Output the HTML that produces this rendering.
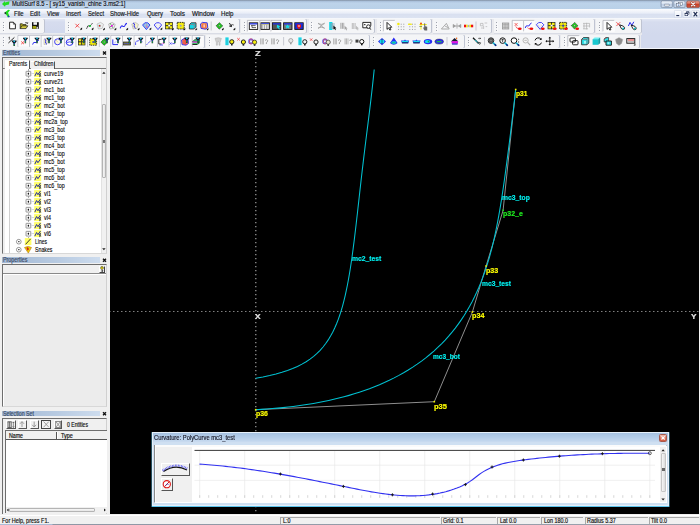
<!DOCTYPE html>
<html><head><meta charset="utf-8"><title>MultiSurf 8.5</title>
<style>
html,body{margin:0;padding:0;}
body{width:700px;height:525px;overflow:hidden;position:relative;background:#f0f0f0;font-family:"Liberation Sans",sans-serif;font-size:6.6px;color:#111;}
.a{position:absolute;}
.t{position:absolute;white-space:nowrap;line-height:8px;height:8px;-webkit-text-stroke:0.18px currentColor;}
#title{left:0;top:0;width:700px;height:9px;background:linear-gradient(#7d8a9c 0,#a9bfd9 1.2px,#bdd3ea 3px,#b9d0e8 9px);}
#menu{left:0;top:8.6px;width:700px;height:10px;background:linear-gradient(#fbfcfe 0,#e9eef8 40%,#d9e0f0 55%,#dde4f2 100%);}
#tb{left:0;top:18.5px;width:700px;height:30.5px;background:#e9eaee;}
.fill{position:absolute;background:linear-gradient(#e2e7f4 0,#d6dcee 3px,#d2d9ed 100%);}
.band{position:absolute;background:#f4f5f7;border-radius:0 1.2px 1.2px 0;box-shadow:0.7px 0 0 0 #aeb4c6, 0 0.5px 0 0 #c9cedb;}
.grip{position:absolute;width:1.1px;height:9.2px;background:repeating-linear-gradient(#9fa3ae 0,#9fa3ae 1.1px,transparent 1.1px,transparent 2.66px);box-shadow:0.6px 0.6px 0 #fff;}
.sep{position:absolute;width:1px;height:10px;background:#b9bdc8;}
#canvas{left:109.5px;top:48.6px;width:589.1px;height:465.3px;background:#000;}
#redge{left:698.6px;top:48.6px;width:1.4px;height:466px;background:#f6f6f6;}
#bedge{left:0;top:523.5px;width:700px;height:1.5px;background:linear-gradient(90deg,#aabdd7 0,#aabdd7 52px,#8f97a5 53px,#9aa1ad 100%);}
#status{left:0;top:514.5px;width:700px;height:10.5px;background:#f0f0f0;border-top:0.5px solid #fff;}
.pane{position:absolute;top:1.3px;height:7.5px;border-left:0.7px solid #a8a8a8;border-top:0.7px solid #a8a8a8;box-sizing:border-box;}
.hdr{position:absolute;height:6px;background:linear-gradient(90deg,#a9bdd7,#bccde3 60%,#cddbec);}
.hdr span{position:absolute;left:1px;top:-1.2px;color:#2b3d5c;font-size:6.6px;line-height:8px;}
.cl{position:absolute;font-size:6px;font-weight:bold;line-height:6px;color:#111;}
.lbl{position:absolute;font-family:"Liberation Sans",sans-serif;font-weight:bold;font-size:6.6px;line-height:8px;white-space:nowrap;}
</style></head><body>
<div id="title" class="a"></div>
<div class="t" style="left:12.40px;top:0.28px;font-size:6.7px;color:#0c0e16;transform:scaleX(0.862);transform-origin:0 0;text-shadow:0 0 1.5px #eaf1fa;">MultiSurf 8.5 - [ sy15_vanish_chine 3.ms2:1]</div>
<svg class="a" style="left:1px;top:0px" width="10" height="9" viewBox="0 0 10 9"><path d="M1 4 L4 1 L4 2.5 L8.5 1.2 L8 4.5 L4.5 5.2 L4 6.8 Z" fill="#22dd22"/></svg>
<svg class="a" style="left:655px;top:0px" width="45" height="9" viewBox="655 0 45 9"><defs><linearGradient id="gb" x1="0" y1="0" x2="0" y2="1"><stop offset="0" stop-color="#f1f6fc"/><stop offset="0.45" stop-color="#d5e1f0"/><stop offset="0.5" stop-color="#bfd0e6"/><stop offset="1" stop-color="#cbdaec"/></linearGradient><linearGradient id="gr" x1="0" y1="0" x2="0" y2="1"><stop offset="0" stop-color="#eeb0a2"/><stop offset="0.45" stop-color="#d9634e"/><stop offset="0.5" stop-color="#c7412a"/><stop offset="1" stop-color="#d0553c"/></linearGradient></defs><rect x="661.1" y="0.9" width="11.3" height="6.7" rx="1.3" fill="url(#gb)" stroke="#6d7b93" stroke-width="0.6"/><rect x="673.8" y="0.9" width="11.3" height="6.7" rx="1.3" fill="url(#gb)" stroke="#6d7b93" stroke-width="0.6"/><rect x="686.7" y="0.9" width="12.8" height="6.7" rx="1.3" fill="url(#gr)" stroke="#7a3a30" stroke-width="0.55"/><rect x="664.4" y="4.2" width="4.9" height="1.9" rx="0.4" fill="#fff" stroke="#4a566e" stroke-width="0.45"/><rect x="678.4" y="2.3" width="3.8" height="2.9" fill="#fff" stroke="#4a566e" stroke-width="0.45"/><rect x="676.7" y="3.6" width="3.8" height="2.9" fill="#fff" stroke="#4a566e" stroke-width="0.45"/><rect x="677.7" y="4.6" width="1.8" height="1" fill="#3a68b0"/><path d="M691.3 2.6L695 6M695 2.6L691.3 6" stroke="#7a2a20" stroke-width="1.9" stroke-linecap="round"/><path d="M691.3 2.6L695 6M695 2.6L691.3 6" stroke="#fff" stroke-width="1.1" stroke-linecap="round"/></svg>
<div id="menu" class="a"></div>
<svg class="a" style="left:2px;top:9px" width="10" height="10" viewBox="0 0 10 10"><path d="M2.2 4 L6.2 0.8 L8 1.2 L6 3.8 L7.8 8 L5.8 8.2 L4.2 5.5 Z" fill="#19e019"/><path d="M2 4 L4 3 L4.3 5.6 Z" fill="#223"/><path d="M6 6 L7.8 8 L5.8 8.2Z" fill="#2233cc"/></svg>
<div class="t" style="left:14.00px;top:9.51px;font-size:6.6px;color:#141822;transform:scaleX(0.903);transform-origin:0 0;">File</div><div class="t" style="left:30.00px;top:9.51px;font-size:6.6px;color:#141822;transform:scaleX(0.879);transform-origin:0 0;">Edit</div><div class="t" style="left:47.00px;top:9.51px;font-size:6.6px;color:#141822;transform:scaleX(0.860);transform-origin:0 0;">View</div><div class="t" style="left:66.20px;top:9.51px;font-size:6.6px;color:#141822;transform:scaleX(0.897);transform-origin:0 0;">Insert</div><div class="t" style="left:88.00px;top:9.51px;font-size:6.6px;color:#141822;transform:scaleX(0.872);transform-origin:0 0;">Select</div><div class="t" style="left:110.40px;top:9.51px;font-size:6.6px;color:#141822;transform:scaleX(0.901);transform-origin:0 0;">Show-Hide</div><div class="t" style="left:147.00px;top:9.51px;font-size:6.6px;color:#141822;transform:scaleX(0.890);transform-origin:0 0;">Query</div><div class="t" style="left:170.00px;top:9.51px;font-size:6.6px;color:#141822;transform:scaleX(0.974);transform-origin:0 0;">Tools</div><div class="t" style="left:191.50px;top:9.51px;font-size:6.6px;color:#141822;transform:scaleX(0.959);transform-origin:0 0;">Window</div><div class="t" style="left:220.50px;top:9.51px;font-size:6.6px;color:#141822;transform:scaleX(0.921);transform-origin:0 0;">Help</div>
<svg class="a" style="left:670px;top:9px" width="30" height="10" viewBox="670 9 30 10"><defs><linearGradient id="gm" x1="0" y1="0" x2="0" y2="1"><stop offset="0" stop-color="#ffffff"/><stop offset="1" stop-color="#e6ecf7"/></linearGradient></defs><rect x="674.4" y="10.4" width="7.1" height="7.3" rx="0.8" fill="url(#gm)" stroke="#c3cbdc" stroke-width="0.5"/><rect x="683" y="10.4" width="7.1" height="7.3" rx="0.8" fill="url(#gm)" stroke="#c3cbdc" stroke-width="0.5"/><rect x="691.7" y="10.4" width="7.3" height="7.3" rx="0.8" fill="url(#gm)" stroke="#c3cbdc" stroke-width="0.5"/><rect x="676.3" y="15" width="2.9" height="1.1" fill="#1f2c52"/><path d="M686.4 13V11.9H689V14.3H688" fill="none" stroke="#1f2c52" stroke-width="0.6"/><path d="M686.2 12H689.2" stroke="#1f2c52" stroke-width="0.8"/><rect x="685" y="13.3" width="2.7" height="2.4" fill="#f6f8fc" stroke="#1f2c52" stroke-width="0.6"/><path d="M684.8 13.4H687.9" stroke="#1f2c52" stroke-width="0.8"/><path d="M693.6 11.8L697.2 16.3M697.2 11.8L693.6 16.3" stroke="#1f2c52" stroke-width="1.15"/></svg>
<div id="tb" class="a"></div>
<div class="a" style="left:0;top:17.8px;width:700px;height:1.3px;background:#f5f7fb"></div><div class="fill" style="left:45px;top:19px;width:19.6px;height:14px"></div><div class="fill" style="left:642.4px;top:19px;width:57.6px;height:15.5px"></div><div class="fill" style="left:640.5px;top:34.5px;width:59.5px;height:13.2px;background:#d2d9ed"></div>
<div class="band" style="left:0px;top:19.1px;width:44.3px;height:13.8px"></div><div class="grip" style="left:2.8px;top:21.7px"></div><div class="band" style="left:65px;top:19.1px;width:174px;height:13.8px"></div><div class="grip" style="left:67.8px;top:21.7px"></div><div class="band" style="left:241.4px;top:19.1px;width:65px;height:13.8px"></div><div class="grip" style="left:244.2px;top:21.7px"></div><div class="band" style="left:308.6px;top:19.1px;width:65.7px;height:13.8px"></div><div class="grip" style="left:311.4px;top:21.7px"></div><div class="band" style="left:377px;top:19.1px;width:54.4px;height:13.8px"></div><div class="grip" style="left:379.8px;top:21.7px"></div><div class="band" style="left:433px;top:19.1px;width:58.4px;height:13.8px"></div><div class="grip" style="left:435.8px;top:21.7px"></div><div class="band" style="left:493.6px;top:19.1px;width:100.7px;height:13.8px"></div><div class="grip" style="left:496.4px;top:21.7px"></div><div class="band" style="left:596.4px;top:19.1px;width:45px;height:13.8px"></div><div class="grip" style="left:599.2px;top:21.7px"></div><div class="band" style="left:0px;top:34.5px;width:204.3px;height:13.2px"></div><div class="grip" style="left:2.8px;top:37.1px"></div><div class="band" style="left:205.7px;top:34.5px;width:162.9px;height:13.2px"></div><div class="grip" style="left:208.5px;top:37.1px"></div><div class="band" style="left:370.3px;top:34.5px;width:93.3px;height:13.2px"></div><div class="grip" style="left:373.1px;top:37.1px"></div><div class="band" style="left:465px;top:34.5px;width:93.6px;height:13.2px"></div><div class="grip" style="left:467.8px;top:37.1px"></div><div class="band" style="left:560.7px;top:34.5px;width:78.6px;height:13.2px"></div><div class="grip" style="left:563.5px;top:37.1px"></div>
<div class="a" style="left:0;top:47.6px;width:700px;height:1.2px;background:#f3f5fa"></div>
<svg class="a" style="left:0px;top:18px" width="700" height="31" viewBox="0 18 700 31"><path d="M9.6 22.2 h3.8 l2 2 v4.6 h-5.8z" fill="#fff" stroke="#111" stroke-width="0.9" stroke-linejoin="round"/><path d="M13.4 22.2 v2 h2" fill="none" stroke="#111" stroke-width="0.6"/><path d="M20.2 28.6 v-4.8 h2.2 l0.6 0.8 h3 v1.2" fill="#b8b020" stroke="#111" stroke-width="0.7"/><path d="M20.2 28.6 l1.6 -2.8 h6 l-1.8 2.8z" fill="#d8d040" stroke="#111" stroke-width="0.7" stroke-linejoin="round"/><path d="M25 22.8 q1.6 -0.8 2.6 0.6 m0 0 l-1.2 -0.2 m1.2 0.2 l0.2 -1.2" fill="none" stroke="#111" stroke-width="0.6"/><rect x="32" y="22.2" width="6.8" height="6.6" fill="#111"/><rect x="33.4" y="22.2" width="3.6" height="2.6" fill="#f4f4f4"/><rect x="32.6" y="26" width="3.6" height="2.8" fill="#a0a010"/><rect x="36.6" y="26.8" width="1.2" height="2" fill="#fff"/><path d="M75.4 23.8 l3.8 3.8 M79.2 23.8 l-3.8 3.8" fill="none" stroke="#f03030" stroke-width="0.8"/><path d="M80.2 29 l1.9 -1.4 l0 1.6 l-1.4 1z" fill="#111"/><path d="M86.6 28.6 l1.6 -3 l1.8 0.6 l2.4 -3" fill="none" stroke="#111" stroke-width="1" stroke-dasharray="1.4 0.5"/><circle cx="90" cy="26" r="1" fill="#10d030"/><path d="M91.6 29 l1.9 -1.4 l0 1.6 l-1.4 1z" fill="#111"/><path d="M97 24 l3.6 -1.6 l3 2 l-1.4 4 l-3.8 0.6z" fill="#eee" stroke="#aaa" stroke-width="0.6"/><circle cx="99.6" cy="25.8" r="1.6" fill="#a8f0f0"/><rect x="98.8" y="25" width="1.6" height="1.6" fill="#f01010"/><path d="M103 29.2 l1.9 -1.4 l0 1.6 l-1.4 1z" fill="#111"/><path d="M108.6 24 l3.6 -1.6 l3 2 l-1.4 4 l-3.8 0.6z" fill="#eee" stroke="#999" stroke-width="0.6"/><path d="M110 23 l3 5" fill="none" stroke="#20a020" stroke-width="0.6"/><path d="M109.2 27.6 l4.6 -3.4" fill="none" stroke="#333" stroke-width="0.6"/><rect x="111" y="25" width="1.7" height="1.7" fill="#f010f0"/><path d="M114.4 29.2 l1.9 -1.4 l0 1.6 l-1.4 1z" fill="#111"/><path d="M120.2 28.4 q1 -3.4 2.6 -2.2 q1.4 1 2.2 -0.8 q0.8 -2 2 -2" fill="none" stroke="#2a2af0" stroke-width="1.1"/><path d="M126.2 29.2 l1.9 -1.4 l0 1.6 l-1.4 1z" fill="#111"/><path d="M131.8 24 l3.6 -1.6 l3 2 l-1.4 4 l-3.8 0.6z" fill="#f4f0c8" stroke="#aaa" stroke-width="0.6"/><path d="M133 23 q2.4 0.6 1.2 2.6 q-0.6 1.6 1.6 2.8" fill="none" stroke="#2a2af0" stroke-width="1"/><path d="M137.6 29.2 l1.9 -1.4 l0 1.6 l-1.4 1z" fill="#111"/><path d="M142.6 25 l2.2 -2.2 h3 l2.2 2.2 l-3.6 4.6z" fill="#80e8f0" stroke="#2a2af0" stroke-width="0.9" stroke-linejoin="round"/><path d="M144.2 24 l2.4 4 M146.2 23 l0.6 5 M148.4 24 l-1.6 4" fill="none" stroke="#f040a0" stroke-width="0.5"/><path d="M149.4 29 l1.9 -1.4 l0 1.6 l-1.4 1z" fill="#111"/><path d="M154.2 25 l2.2 -2.2 h3 l2.2 2.2 l-3.6 4.6z" fill="#fff" stroke="#2a2af0" stroke-width="0.9" stroke-linejoin="round"/><path d="M156 25 h4 l-2 3z" fill="none" stroke="#bbb" stroke-width="0.4"/><path d="M160.4 29 l1.9 -1.4 l0 1.6 l-1.4 1z" fill="#111"/><rect x="165.6" y="22.4" width="3.4" height="3.1" fill="#f4ec10" stroke="#222" stroke-width="0.7"/><rect x="169.2" y="22.4" width="3.4" height="3.1" fill="#f4ec10" stroke="#222" stroke-width="0.7"/><rect x="165.6" y="25.8" width="3.4" height="3.1" fill="#f4ec10" stroke="#222" stroke-width="0.7"/><rect x="169.2" y="25.8" width="3.4" height="3.1" fill="#f4ec10" stroke="#222" stroke-width="0.7"/><rect x="168.2" y="24.7" width="2" height="1.8" fill="#fff"/><path d="M171.8 29.2 l1.9 -1.4 l0 1.6 l-1.4 1z" fill="#111"/><rect x="177.2" y="22.4" width="7" height="6.6" fill="#f4ec10" stroke="#222" stroke-width="0.9" stroke-dasharray="1.6 0.7"/><circle cx="180.7" cy="25.7" r="1" fill="#a0a0c0"/><path d="M183.4 29.4 l1.9 -1.4 l0 1.6 l-1.4 1z" fill="#111"/><path d="M189.4 24.6 l1.8 -1.8 h4.8 v4.4 l-1.8 1.8 h-4.8z" fill="#10d8e8" stroke="#222" stroke-width="0.8" stroke-linejoin="round"/><path d="M189.4 24.6 h4.8 v4.4 M194.2 24.6 l1.8 -1.8" fill="none" stroke="#e04040" stroke-width="0.5"/><path d="M195.2 29.4 l1.9 -1.4 l0 1.6 l-1.4 1z" fill="#111"/><path d="M200.4 24 l2 -1.6 l4.8 0.4 l0.6 4.8 l-2.4 1.6 l-4.4 -0.8z" fill="#f0a060" stroke="#2a2af0" stroke-width="0.9" stroke-linejoin="round"/><path d="M203 23.4 v5 M205 23.6 v5" fill="none" stroke="#f02020" stroke-width="0.7"/><rect x="203.6" y="24.4" width="1" height="3" fill="#fff"/><path d="M206.6 29.4 l1.9 -1.4 l0 1.6 l-1.4 1z" fill="#111"/><path d="M211.2 21.5 V30.5" fill="none" stroke="#b4b7c2" stroke-width="0.7"/><path d="M216.1 25.8 l3.4 -3.2 l3.2 3.4 l-3.4 3.2z" fill="#20d020" stroke="#222" stroke-width="0.8" stroke-dasharray="1 0.6"/><circle cx="219.4" cy="25.8" r="0.8" fill="#e8ffe8" stroke="#333" stroke-width="0.4"/><path d="M221.8 29.2 l1.9 -1.4 l0 1.6 l-1.4 1z" fill="#111"/><path d="M229.4 23 l2 3.6 m0 0 l-2.2 -0.6 m2.2 0.6 l0.4 -2.2" fill="none" stroke="#111" stroke-width="0.9"/><path d="M232.6 24 l0.8 1.4" fill="none" stroke="#111" stroke-width="0.7"/><path d="M233.4 29.2 l1.9 -1.4 l0 1.6 l-1.4 1z" fill="#111"/><rect x="247.4" y="20.4" width="12" height="11.2" fill="#fbfbfc"/><path d="M247.4 31.6 V20.4 H259.4" fill="none" stroke="#9a9ca6" stroke-width="0.6"/><path d="M259.4 20.4 V31.6 H247.4" fill="none" stroke="#fff" stroke-width="0.6"/><rect x="259.8" y="20.4" width="10.8" height="11.2" fill="#fbfbfc"/><path d="M259.8 31.6 V20.4 H270.6" fill="none" stroke="#9a9ca6" stroke-width="0.6"/><path d="M270.6 20.4 V31.6 H259.8" fill="none" stroke="#fff" stroke-width="0.6"/><rect x="271" y="20.4" width="11" height="11.2" fill="#fbfbfc"/><path d="M271 31.6 V20.4 H282" fill="none" stroke="#9a9ca6" stroke-width="0.6"/><path d="M282 20.4 V31.6 H271" fill="none" stroke="#fff" stroke-width="0.6"/><rect x="249.3" y="22.8" width="8.4" height="6.6" fill="#fff" stroke="#111" stroke-width="0.9"/><rect x="249.7" y="23.2" width="7.6" height="1.3" fill="#2030e0"/><path d="M251 25.6 h4.6 M252 25.6 v2 h4" fill="none" stroke="#222" stroke-width="0.7"/><rect x="261" y="22.8" width="8.4" height="6.6" fill="#fff" stroke="#111" stroke-width="0.9"/><rect x="261.4" y="23.2" width="7.6" height="1.3" fill="#2030e0"/><path d="M262.8 24.6 v4.6 M264.6 24.6 v4.6 M266.4 24.6 v4.6 M268 24.6 v4.6" fill="none" stroke="#666" stroke-width="0.6"/><rect x="261.4" y="24.1" width="7.6" height="0.6" fill="#e8e060"/><rect x="272.4" y="22.8" width="8.4" height="6.6" fill="#555" stroke="#111" stroke-width="0.9"/><rect x="272.8" y="23.2" width="7.6" height="1.3" fill="#2030e0"/><path d="M277 24.8 l3.6 1.6 l-1.8 0.6 l1.2 2.2 l-1 0.4 l-1.2 -2.2 l-1 1z" fill="#10e0f0"/><rect x="283.6" y="22.8" width="8.4" height="6.6" fill="#777" stroke="#111" stroke-width="0.9"/><rect x="284" y="23.2" width="7.6" height="1.3" fill="#2030e0"/><path d="M287.6 24.4 l0.8 1.4 h1.8 l-1.4 1.2 l0.6 1.8 l-1.8 -1 l-1.8 1 l0.6 -1.8 l-1.4 -1.2 h1.8z" fill="#10e0f0"/><rect x="294.8" y="22.8" width="8.4" height="6.6" fill="#2030d0" stroke="#111" stroke-width="0.9"/><rect x="295.2" y="23.2" width="7.6" height="1.3" fill="#2030e0"/><path d="M297 24.6 h4 v2.4 q-2 2.2 -2 2.2 q0 0 -2 -2.2z" fill="#f01818"/><circle cx="299" cy="26" r="0.8" fill="#fff"/><path d="M318 23 l6.6 5.6 M324.6 23 l-6.6 5.6 M318 23.6 q3.2 1.6 6.6 0 M318 28 q3.2 -1.6 6.6 0" fill="none" stroke="#a4a4a4" stroke-width="0.9"/><rect x="329.2" y="22" width="3.2" height="8" fill="#10d8e8"/><rect x="330.6" y="23" width="1" height="6" fill="#8ab"/><rect x="332.1" y="23" width="1" height="6" fill="#8ab"/><rect x="333.6" y="23" width="0.8" height="6" fill="#8ab"/><path d="M333.4 25.4 v4.2 l1 -0.8 l0.8 1.4 l0.7 -0.4 l-0.8 -1.4 l1.3 -0.1z" fill="#111"/><rect x="340.4" y="22.8" width="1" height="6" fill="#a4a4a4"/><rect x="341.9" y="22.8" width="1" height="6" fill="#a4a4a4"/><rect x="343.4" y="22.8" width="0.8" height="6" fill="#a4a4a4"/><path d="M344.6 25.8 v4 l1 -0.8 l0.8 1.4 l0.7 -0.4 l-0.8 -1.4 l1.3 -0.1z" fill="#a4a4a4"/><rect x="351.8" y="23" width="1" height="6" fill="#bbb"/><rect x="353.3" y="23" width="1" height="6" fill="#bbb"/><rect x="354.8" y="23" width="0.8" height="6" fill="#bbb"/><path d="M356 25.8 v4 l1 -0.8 l0.8 1.4 l0.7 -0.4 l-0.8 -1.4 l1.3 -0.1z" fill="#bbb"/><path d="M362.8 22.4 h8 v3 q-1 2.4 -3.4 2.4 h-4.6z" fill="#fff" stroke="#111" stroke-width="0.9"/><rect x="364.2" y="24" width="1.2" height="1.2" fill="#111"/><circle cx="368.4" cy="26.6" r="1.8" fill="#fff" stroke="#111" stroke-width="0.9"/><path d="M369.6 28 l1.2 1.6" fill="none" stroke="#111" stroke-width="1"/><rect x="383.4" y="20.4" width="11.6" height="11" fill="#fbfbfc"/><path d="M383.4 31.4 V20.4 H395" fill="none" stroke="#9a9ca6" stroke-width="0.6"/><path d="M395 20.4 V31.4 H383.4" fill="none" stroke="#fff" stroke-width="0.6"/><path d="M387 22.4 v7 l1.6 -1.5 l1.2 2.2 l1.1 -0.5 l-1.2 -2.2 l2.1 -0.2z" fill="#fff" stroke="#111" stroke-width="0.9" stroke-linejoin="round"/><rect x="398.15" y="23.75" width="0.9" height="0.9" fill="#8a8a90"/><rect x="398.15" y="26.35" width="0.9" height="0.9" fill="#8a8a90"/><rect x="398.15" y="28.95" width="0.9" height="0.9" fill="#8a8a90"/><rect x="400.75" y="23.75" width="0.9" height="0.9" fill="#8a8a90"/><rect x="400.75" y="26.35" width="0.9" height="0.9" fill="#8a8a90"/><rect x="400.75" y="28.95" width="0.9" height="0.9" fill="#8a8a90"/><rect x="403.35" y="23.75" width="0.9" height="0.9" fill="#8a8a90"/><rect x="403.35" y="26.35" width="0.9" height="0.9" fill="#8a8a90"/><rect x="403.35" y="28.95" width="0.9" height="0.9" fill="#8a8a90"/><circle cx="398.4" cy="24" r="1.3" fill="#f4ec10"/><rect x="409.35" y="23.75" width="0.9" height="0.9" fill="#8a8a90"/><rect x="409.35" y="26.35" width="0.9" height="0.9" fill="#8a8a90"/><rect x="409.35" y="28.95" width="0.9" height="0.9" fill="#8a8a90"/><rect x="411.95" y="23.75" width="0.9" height="0.9" fill="#8a8a90"/><rect x="411.95" y="26.35" width="0.9" height="0.9" fill="#8a8a90"/><rect x="411.95" y="28.95" width="0.9" height="0.9" fill="#8a8a90"/><rect x="414.55" y="23.75" width="0.9" height="0.9" fill="#8a8a90"/><rect x="414.55" y="26.35" width="0.9" height="0.9" fill="#8a8a90"/><rect x="414.55" y="28.95" width="0.9" height="0.9" fill="#8a8a90"/><rect x="408" y="23.6" width="3.8" height="1.3" fill="#f4ec10"/><path d="M421 22.4 v7.2 M419.4 24.6 h7.4" fill="none" stroke="#f4ec10" stroke-width="1"/><rect x="420.2" y="22.8" width="1.6" height="1.6" fill="#f03010"/><rect x="419.4" y="26" width="2.6" height="1" fill="#8a9a60"/><path d="M424.2 23.2 v4.4 l-0.8 -0.4 v1.6 l1.2 1.6 h2.6 v-3.6 l-2 -0.6 v-2.6z" fill="#666"/><path d="M441.4 29 l5 -5.6 l2.8 5.6z M445 26 l3 1.6" fill="none" stroke="#9a9a9a" stroke-width="0.8"/><path d="M453.2 26 h7.6 M453.2 24.4 l2.2 1.6 l-2.2 1.6z M460.8 24.4 l-2.2 1.6 l2.2 1.6z M457 23.4 v5.2" fill="#9a9a9a" stroke="#9a9a9a" stroke-width="0.7"/><rect x="464" y="24.7" width="2.2" height="2.6" fill="#f01010"/><rect x="466.2" y="24.7" width="1.6" height="2.6" fill="#f4ec10"/><rect x="467.8" y="24.9" width="1.6" height="2.2" fill="#a0a8d0"/><rect x="469.4" y="24.7" width="1.6" height="2.6" fill="#f4ec10"/><rect x="471" y="24.7" width="2.2" height="2.6" fill="#f01010"/><path d="M476 21.5 V30.5" fill="none" stroke="#b4b7c2" stroke-width="0.7"/><path d="M480.4 23.4 h2.6 v2.4 h-2.6z M484.6 23 h2.6 M483.6 25.8 v3.2 M485.6 26.6 h1.6 M483 28 h-2" fill="none" stroke="#b4b4b4" stroke-width="0.7"/><rect x="502.6" y="23" width="6.2" height="6" fill="#e8e8e8" stroke="#8a8a8a" stroke-width="0.7"/><path d="M504.2 23 v6 M505.7 23 v6 M507.2 23 v6 M502.6 24.5 h6.2 M502.6 26 h6.2 M502.6 27.5 h6.2" fill="none" stroke="#8a8a8a" stroke-width="0.45"/><rect x="512.2" y="20.4" width="11.2" height="11" fill="#fbfbfc"/><path d="M512.2 31.4 V20.4 H523.4" fill="none" stroke="#9a9ca6" stroke-width="0.6"/><path d="M523.4 20.4 V31.4 H512.2" fill="none" stroke="#fff" stroke-width="0.6"/><rect x="523.6" y="20.4" width="10.8" height="11" fill="#fbfbfc"/><path d="M523.6 31.4 V20.4 H534.4" fill="none" stroke="#9a9ca6" stroke-width="0.6"/><path d="M534.4 20.4 V31.4 H523.6" fill="none" stroke="#fff" stroke-width="0.6"/><path d="M514.6 23 l3 3 M517.6 23 l-3 3" fill="none" stroke="#f03030" stroke-width="0.7"/><path d="M515.8 26.4 q0.6 2 2.6 2.2" fill="none" stroke="#f03030" stroke-width="0.7"/><ellipse cx="519.8" cy="28.8" rx="1.9" ry="1.2" fill="#f01010"/><path d="M525.2 28 q0.8 -3 2.4 -2.2 q1.4 0.8 2 -0.8 q0.8 -2 2 -2" fill="none" stroke="#2a2af0" stroke-width="1"/><path d="M527.4 27.6 q1 1.4 2.6 1.2" fill="none" stroke="#f03030" stroke-width="0.7"/><ellipse cx="531.4" cy="28.8" rx="1.9" ry="1.2" fill="#f01010"/><path d="M536.4 24.8 l2.2 -2.2 h3 l2.2 2.2 l-3.6 4.6z" fill="#fff" stroke="#2a2af0" stroke-width="0.9" stroke-linejoin="round"/><path d="M538.2 25 h3.6 l-1.8 2.6z" fill="none" stroke="#bbb" stroke-width="0.4"/><ellipse cx="542.8" cy="28.8" rx="1.9" ry="1.2" fill="#f01010"/><rect x="548" y="22.4" width="3.4" height="3.1" fill="#f4ec10" stroke="#222" stroke-width="0.7"/><rect x="551.6" y="22.4" width="3.4" height="3.1" fill="#f4ec10" stroke="#222" stroke-width="0.7"/><rect x="548" y="25.8" width="3.4" height="3.1" fill="#f4ec10" stroke="#222" stroke-width="0.7"/><rect x="551.6" y="25.8" width="3.4" height="3.1" fill="#f4ec10" stroke="#222" stroke-width="0.7"/><rect x="550.6" y="24.7" width="2" height="1.8" fill="#fff"/><ellipse cx="554.8" cy="28.8" rx="1.9" ry="1.2" fill="#f01010"/><rect x="559.6" y="22.4" width="7" height="6.6" fill="#f4ec10" stroke="#222" stroke-width="0.9" stroke-dasharray="1.6 0.7"/><path d="M563.1 22.4 v6.6 M559.6 25.7 h7" fill="none" stroke="#555" stroke-width="0.5"/><circle cx="563.1" cy="25.7" r="1" fill="#3040c0"/><ellipse cx="566" cy="28.8" rx="1.9" ry="1.2" fill="#f01010"/><path d="M571.3 25.6 l3.4 -3.2 l3.2 3.4 l-3.4 3.2z" fill="#20d020" stroke="#222" stroke-width="0.8" stroke-dasharray="1 0.6"/><circle cx="574.6" cy="25.6" r="0.8" fill="#e8ffe8" stroke="#333" stroke-width="0.4"/><ellipse cx="577.2" cy="28.8" rx="1.9" ry="1.2" fill="#f01010"/><path d="M583 23.4 h6.6 M583 26 h6.6 M583 28.8 h5 M584 23.4 v5.4 M586.6 22.8 v6.6 M589.6 23.4 v4" fill="none" stroke="#b0b0b0" stroke-width="0.7"/><rect x="603" y="20.4" width="11.4" height="11" fill="#fbfbfc"/><path d="M603 31.4 V20.4 H614.4" fill="none" stroke="#9a9ca6" stroke-width="0.6"/><path d="M614.4 20.4 V31.4 H603" fill="none" stroke="#fff" stroke-width="0.6"/><path d="M607 22.4 v7 l1.6 -1.5 l1.2 2.2 l1.1 -0.5 l-1.2 -2.2 l2.1 -0.2z" fill="#fff" stroke="#111" stroke-width="0.9" stroke-linejoin="round"/><path d="M616.4 22.2 l3.8 3.8 M620.2 22.2 l-3.8 3.8" fill="none" stroke="#f03030" stroke-width="0.8"/><path d="M619.6 24.8 l3.8 1.4 q2 1.6 0.8 3 q-1.6 1 -3 -0.8z" fill="#fff" stroke="#111" stroke-width="0.9" stroke-linejoin="round"/><circle cx="623.2" cy="28.4" r="1" fill="#10c0c8"/><path d="M628.4 26 l1.6 -3.6 l1.8 3 l2 -3.6" fill="none" stroke="#2a2af0" stroke-width="1"/><path d="M631.2 25 l3.8 1.4 q2 1.6 0.8 3 q-1.6 1 -3 -0.8z" fill="#fff" stroke="#111" stroke-width="0.9" stroke-linejoin="round"/><circle cx="634.8" cy="28.6" r="1" fill="#10c0c8"/><path d="M18 46.8 V35.4 H29" fill="none" stroke="#a9acb8" stroke-width="0.8"/><rect x="18.4" y="35.8" width="10.8" height="10.6" fill="#fbfbfc"/><path d="M29.62 46.8 V35.4 H40.62" fill="none" stroke="#a9acb8" stroke-width="0.8"/><rect x="30.02" y="35.8" width="10.8" height="10.6" fill="#fbfbfc"/><path d="M41.24 46.8 V35.4 H52.24" fill="none" stroke="#a9acb8" stroke-width="0.8"/><rect x="41.64" y="35.8" width="10.8" height="10.6" fill="#fbfbfc"/><path d="M52.86 46.8 V35.4 H63.86" fill="none" stroke="#a9acb8" stroke-width="0.8"/><rect x="53.26" y="35.8" width="10.8" height="10.6" fill="#fbfbfc"/><path d="M64.48 46.8 V35.4 H75.48" fill="none" stroke="#a9acb8" stroke-width="0.8"/><rect x="64.88" y="35.8" width="10.8" height="10.6" fill="#fbfbfc"/><path d="M76.1 46.8 V35.4 H87.1" fill="none" stroke="#a9acb8" stroke-width="0.8"/><rect x="76.5" y="35.8" width="10.8" height="10.6" fill="#fbfbfc"/><path d="M87.72 46.8 V35.4 H98.72" fill="none" stroke="#a9acb8" stroke-width="0.8"/><rect x="88.12" y="35.8" width="10.8" height="10.6" fill="#fbfbfc"/><path d="M99.34 46.8 V35.4 H110.34" fill="none" stroke="#a9acb8" stroke-width="0.8"/><rect x="99.74" y="35.8" width="10.8" height="10.6" fill="#fbfbfc"/><path d="M110.96 46.8 V35.4 H121.96" fill="none" stroke="#a9acb8" stroke-width="0.8"/><rect x="111.36" y="35.8" width="10.8" height="10.6" fill="#fbfbfc"/><path d="M122.58 46.8 V35.4 H133.58" fill="none" stroke="#a9acb8" stroke-width="0.8"/><rect x="122.98" y="35.8" width="10.8" height="10.6" fill="#fbfbfc"/><path d="M134.2 46.8 V35.4 H145.2" fill="none" stroke="#a9acb8" stroke-width="0.8"/><rect x="134.6" y="35.8" width="10.8" height="10.6" fill="#fbfbfc"/><path d="M145.82 46.8 V35.4 H156.82" fill="none" stroke="#a9acb8" stroke-width="0.8"/><rect x="146.22" y="35.8" width="10.8" height="10.6" fill="#fbfbfc"/><path d="M157.44 46.8 V35.4 H168.44" fill="none" stroke="#a9acb8" stroke-width="0.8"/><rect x="157.84" y="35.8" width="10.8" height="10.6" fill="#fbfbfc"/><path d="M169.06 46.8 V35.4 H180.06" fill="none" stroke="#a9acb8" stroke-width="0.8"/><rect x="169.46" y="35.8" width="10.8" height="10.6" fill="#fbfbfc"/><path d="M180.68 46.8 V35.4 H191.68" fill="none" stroke="#a9acb8" stroke-width="0.8"/><rect x="181.08" y="35.8" width="10.8" height="10.6" fill="#fbfbfc"/><path d="M192.3 46.8 V35.4 H203.3" fill="none" stroke="#a9acb8" stroke-width="0.8"/><rect x="192.7" y="35.8" width="10.8" height="10.6" fill="#fbfbfc"/><path d="M8.4 43 l6 -5.6" fill="none" stroke="#111" stroke-width="0.9"/><path d="M8.6 37.4 l0.8 -0.4 v2.6" fill="none" stroke="#111" stroke-width="0.6"/><path d="M11.8 40.6 h4.8 v0.8 l-1.7 2 v2.6 h-1.4 v-2.6 l-1.7 -2z" fill="#14141c"/><path d="M13.45 40.4 h1.5 v1.2 l-0.75 0.9 l-0.75 -0.9z" fill="#20c8f0"/><rect x="13.65" y="43" width="1.1" height="1.2" fill="#2050d0"/><rect x="13.65" y="44" width="1.1" height="1.6" fill="#20a050"/><path d="M21.2 41.4 l2.8 2.8 M24 41.4 l-2.8 2.8" fill="none" stroke="#f03030" stroke-width="0.8"/><path d="M23 37.8 h4.8 v0.8 l-1.7 2 v2.6 h-1.4 v-2.6 l-1.7 -2z" fill="#14141c"/><path d="M24.65 37.6 h1.5 v1.2 l-0.75 0.9 l-0.75 -0.9z" fill="#20c8f0"/><rect x="24.85" y="40.2" width="1.1" height="1.2" fill="#2050d0"/><rect x="24.85" y="41.2" width="1.1" height="1.6" fill="#20a050"/><path d="M32.6 44.6 q0.8 -3 2.4 -2.2 q1.4 0.8 2 -0.6 q0.8 -1.6 2 -1.8" fill="none" stroke="#2a2af0" stroke-width="1"/><path d="M34.6 37.8 h4.8 v0.8 l-1.7 2 v2.6 h-1.4 v-2.6 l-1.7 -2z" fill="#14141c"/><path d="M36.25 37.6 h1.5 v1.2 l-0.75 0.9 l-0.75 -0.9z" fill="#20c8f0"/><rect x="36.45" y="40.2" width="1.1" height="1.2" fill="#2050d0"/><rect x="36.45" y="41.2" width="1.1" height="1.6" fill="#20a050"/><path d="M44 39.4 l2.6 -1 l1.6 1.6 l-1.4 4 l-2.8 0.6z" fill="#f4f0c0" stroke="#aaa" stroke-width="0.5"/><path d="M44.6 39 q2 0.8 1 2.6 q-0.6 1.6 1.4 2.8" fill="none" stroke="#2a2af0" stroke-width="1"/><path d="M46.6 37.8 h4.8 v0.8 l-1.7 2 v2.6 h-1.4 v-2.6 l-1.7 -2z" fill="#14141c"/><path d="M48.25 37.6 h1.5 v1.2 l-0.75 0.9 l-0.75 -0.9z" fill="#20c8f0"/><rect x="48.45" y="40.2" width="1.1" height="1.2" fill="#2050d0"/><rect x="48.45" y="41.2" width="1.1" height="1.6" fill="#20a050"/><circle cx="57.6" cy="41.8" r="3" fill="#fffbe0" stroke="#2a2af0" stroke-width="0.9"/><path d="M56 40 l2 2.4" fill="none" stroke="#c8b860" stroke-width="0.5"/><path d="M58.6 37.8 h4.8 v0.8 l-1.7 2 v2.6 h-1.4 v-2.6 l-1.7 -2z" fill="#14141c"/><path d="M60.25 37.6 h1.5 v1.2 l-0.75 0.9 l-0.75 -0.9z" fill="#20c8f0"/><rect x="60.45" y="40.2" width="1.1" height="1.2" fill="#2050d0"/><rect x="60.45" y="41.2" width="1.1" height="1.6" fill="#20a050"/><ellipse cx="69.6" cy="42.4" rx="3.4" ry="3" fill="#fff" stroke="#2a2af0" stroke-width="1"/><path d="M66.6 42.6 q3 -1.4 6 0" fill="none" stroke="#2a2af0" stroke-width="0.8"/><path d="M69.8 37.8 h4.8 v0.8 l-1.7 2 v2.6 h-1.4 v-2.6 l-1.7 -2z" fill="#14141c"/><path d="M71.45 37.6 h1.5 v1.2 l-0.75 0.9 l-0.75 -0.9z" fill="#20c8f0"/><rect x="71.65" y="40.2" width="1.1" height="1.2" fill="#2050d0"/><rect x="71.65" y="41.2" width="1.1" height="1.6" fill="#20a050"/><rect x="78.4" y="38.8" width="3.2" height="3" fill="#f4ec10" stroke="#222" stroke-width="0.7"/><rect x="81.8" y="38.8" width="3.2" height="3" fill="#f4ec10" stroke="#222" stroke-width="0.7"/><rect x="78.4" y="42" width="3.2" height="3" fill="#f4ec10" stroke="#222" stroke-width="0.7"/><rect x="81.8" y="42" width="3.2" height="3" fill="#f4ec10" stroke="#222" stroke-width="0.7"/><path d="M81.4 37.8 h4.8 v0.8 l-1.7 2 v2.6 h-1.4 v-2.6 l-1.7 -2z" fill="#14141c"/><path d="M83.05 37.6 h1.5 v1.2 l-0.75 0.9 l-0.75 -0.9z" fill="#20c8f0"/><rect x="83.25" y="40.2" width="1.1" height="1.2" fill="#2050d0"/><rect x="83.25" y="41.2" width="1.1" height="1.6" fill="#20a050"/><rect x="89.8" y="38.8" width="6.8" height="6.4" fill="#f4ec10" stroke="#222" stroke-width="0.9" stroke-dasharray="1.5 0.7"/><circle cx="93.2" cy="42" r="1" fill="#3040c0"/><path d="M92.8 37.8 h4.8 v0.8 l-1.7 2 v2.6 h-1.4 v-2.6 l-1.7 -2z" fill="#14141c"/><path d="M94.45 37.6 h1.5 v1.2 l-0.75 0.9 l-0.75 -0.9z" fill="#20c8f0"/><rect x="94.65" y="40.2" width="1.1" height="1.2" fill="#2050d0"/><rect x="94.65" y="41.2" width="1.1" height="1.6" fill="#20a050"/><path d="M100.9 42 l3.4 -3.2 l3.2 3.4 l-3.4 3.2z" fill="#20d020" stroke="#222" stroke-width="0.8" stroke-dasharray="1 0.6"/><circle cx="104.2" cy="42" r="0.8" fill="#e8ffe8" stroke="#333" stroke-width="0.4"/><path d="M104.6 37.8 h4.8 v0.8 l-1.7 2 v2.6 h-1.4 v-2.6 l-1.7 -2z" fill="#14141c"/><path d="M106.25 37.6 h1.5 v1.2 l-0.75 0.9 l-0.75 -0.9z" fill="#20c8f0"/><rect x="106.45" y="40.2" width="1.1" height="1.2" fill="#2050d0"/><rect x="106.45" y="41.2" width="1.1" height="1.6" fill="#20a050"/><path d="M112.8 39.4 v5.2 h5.2" fill="none" stroke="#2a2af0" stroke-width="1"/><path d="M114.6 42.8 l2 -1.6" fill="none" stroke="#2a2af0" stroke-width="0.6" stroke-dasharray="0.7 0.5"/><path d="M115.6 37.8 h4.8 v0.8 l-1.7 2 v2.6 h-1.4 v-2.6 l-1.7 -2z" fill="#14141c"/><path d="M117.25 37.6 h1.5 v1.2 l-0.75 0.9 l-0.75 -0.9z" fill="#20c8f0"/><rect x="117.45" y="40.2" width="1.1" height="1.2" fill="#2050d0"/><rect x="117.45" y="41.2" width="1.1" height="1.6" fill="#20a050"/><rect x="123.6" y="42" width="7" height="3" fill="#8a8440" stroke="#222" stroke-width="0.7"/><path d="M124.4 43.6 h5.4" fill="none" stroke="#3040f0" stroke-width="0.9" stroke-dasharray="1.2 0.6"/><path d="M127 37.8 h4.8 v0.8 l-1.7 2 v2.6 h-1.4 v-2.6 l-1.7 -2z" fill="#14141c"/><path d="M128.65 37.6 h1.5 v1.2 l-0.75 0.9 l-0.75 -0.9z" fill="#20c8f0"/><rect x="128.85" y="40.2" width="1.1" height="1.2" fill="#2050d0"/><rect x="128.85" y="41.2" width="1.1" height="1.6" fill="#20a050"/><path d="M135.6 44.8 v-2.6 q0.6 -1.2 2.2 -1.2 q1.4 -0.2 1.6 -1.4" fill="none" stroke="#2a2af0" stroke-width="1" stroke-dasharray="1.6 0.5"/><circle cx="142" cy="41.8" r="0.5" fill="#2a2af0"/><path d="M138.4 37.8 h4.8 v0.8 l-1.7 2 v2.6 h-1.4 v-2.6 l-1.7 -2z" fill="#14141c"/><path d="M140.05 37.6 h1.5 v1.2 l-0.75 0.9 l-0.75 -0.9z" fill="#20c8f0"/><rect x="140.25" y="40.2" width="1.1" height="1.2" fill="#2050d0"/><rect x="140.25" y="41.2" width="1.1" height="1.6" fill="#20a050"/><path d="M146.6 44.8 l4.6 -4.6" fill="none" stroke="#2a2af0" stroke-width="1" stroke-dasharray="1.5 0.7"/><path d="M150 37.8 h4.8 v0.8 l-1.7 2 v2.6 h-1.4 v-2.6 l-1.7 -2z" fill="#14141c"/><path d="M151.65 37.6 h1.5 v1.2 l-0.75 0.9 l-0.75 -0.9z" fill="#20c8f0"/><rect x="151.85" y="40.2" width="1.1" height="1.2" fill="#2050d0"/><rect x="151.85" y="41.2" width="1.1" height="1.6" fill="#20a050"/><path d="M161.6 39.4 h-2.8 v4.6 h2.8" fill="none" stroke="#111" stroke-width="0.9"/><path d="M159.6 45 h3.4" fill="none" stroke="#2a2af0" stroke-width="0.8"/><rect x="162.6" y="42.6" width="1.2" height="1.2" fill="#f010f0"/><path d="M161.6 37.8 h4.8 v0.8 l-1.7 2 v2.6 h-1.4 v-2.6 l-1.7 -2z" fill="#14141c"/><path d="M163.25 37.6 h1.5 v1.2 l-0.75 0.9 l-0.75 -0.9z" fill="#20c8f0"/><rect x="163.45" y="40.2" width="1.1" height="1.2" fill="#2050d0"/><rect x="163.45" y="41.2" width="1.1" height="1.6" fill="#20a050"/><path d="M169.6 42.4 l2.2 2.2 M171.8 42.4 l-2.2 2.2" fill="none" stroke="#2a2af0" stroke-width="0.7"/><path d="M172.4 43.6 h2.4" fill="none" stroke="#2a2af0" stroke-width="0.8"/><path d="M172.4 37.8 h4.8 v0.8 l-1.7 2 v2.6 h-1.4 v-2.6 l-1.7 -2z" fill="#14141c"/><path d="M174.05 37.6 h1.5 v1.2 l-0.75 0.9 l-0.75 -0.9z" fill="#20c8f0"/><rect x="174.25" y="40.2" width="1.1" height="1.2" fill="#2050d0"/><rect x="174.25" y="41.2" width="1.1" height="1.6" fill="#20a050"/><path d="M181.6 40 l2.4 -1.4 l4 0.4 l0.4 4.6 l-2.4 1.6 l-4 -0.6z" fill="#f08060" stroke="#2a2af0" stroke-width="0.9" stroke-linejoin="round"/><path d="M184 39.4 v5 M185.8 39.6 v5" fill="none" stroke="#f02020" stroke-width="0.7"/><path d="M184.4 37.6 h4.8 v0.8 l-1.7 2 v2.6 h-1.4 v-2.6 l-1.7 -2z" fill="#14141c"/><path d="M186.05 37.4 h1.5 v1.2 l-0.75 0.9 l-0.75 -0.9z" fill="#20c8f0"/><rect x="186.25" y="40" width="1.1" height="1.2" fill="#2050d0"/><rect x="186.25" y="41" width="1.1" height="1.6" fill="#20a050"/><path d="M192.4 41.6 l2.4 -2 h5 l-2.4 2z" fill="#30d060" stroke="#222" stroke-width="0.5"/><rect x="192.4" y="41.6" width="5" height="1.2" fill="#e020e0"/><rect x="192.4" y="42.8" width="5" height="1.1" fill="#30d060"/><rect x="192.4" y="43.9" width="5" height="1.1" fill="#222"/><path d="M197.4 41.6 l2.4 -2 v3.4 l-2.4 2z" fill="#208040"/><path d="M195.6 37.4 h4.8 v0.8 l-1.7 2 v2.6 h-1.4 v-2.6 l-1.7 -2z" fill="#14141c"/><path d="M197.25 37.2 h1.5 v1.2 l-0.75 0.9 l-0.75 -0.9z" fill="#20c8f0"/><rect x="197.45" y="39.8" width="1.1" height="1.2" fill="#2050d0"/><rect x="197.45" y="40.8" width="1.1" height="1.6" fill="#20a050"/><path d="M215 38.4 q3.4 -1.4 6.4 0 l-1.4 4.2 v2.6 h-1 v-2.4 l-0.8 -2 l-0.8 2 v2.4 h-1 v-2.6z" fill="#d0d0d0" stroke="#aaa" stroke-width="0.5"/><rect x="225.4" y="37.4" width="3.2" height="7.8" fill="#10d8e8"/><path d="M227 38 v6.6" fill="none" stroke="#60b0c0" stroke-width="0.5"/><rect x="231" y="43.6" width="1.6" height="1.9" fill="#222"/><circle cx="231.8" cy="41.8" r="2.1" fill="#f4ec10" stroke="#222" stroke-width="1"/><path d="M237.2 38 l2.6 2.6 M239.8 38 l-2.6 2.6" fill="none" stroke="#f03030" stroke-width="0.7"/><rect x="242.6" y="43.8" width="1.6" height="1.9" fill="#222"/><circle cx="243.4" cy="42" r="2.1" fill="#f4ec10" stroke="#222" stroke-width="1"/><ellipse cx="251" cy="41.4" rx="2.8" ry="1.6" fill="none" stroke="#2a2af0" stroke-width="0.7" transform="rotate(45 251 41.4)"/><ellipse cx="251" cy="41.4" rx="2.8" ry="1.6" fill="none" stroke="#2a2af0" stroke-width="0.7" transform="rotate(-45 251 41.4)"/><ellipse cx="251" cy="41.4" rx="1.6" ry="2.8" fill="none" stroke="#f03030" stroke-width="0.6"/><rect x="253.8" y="44" width="1.6" height="1.9" fill="#333"/><circle cx="254.6" cy="42.2" r="2.1" fill="#f4ec10" stroke="#333" stroke-width="0.8"/><rect x="260.2" y="38.4" width="1" height="6" fill="#b0b0b0"/><rect x="261.7" y="38.4" width="1" height="6" fill="#b0b0b0"/><rect x="263.2" y="38.4" width="0.8" height="6" fill="#b0b0b0"/><path d="M265 40.4 q1.8 -1.6 2.8 0.2 q0 1.4 -1.4 1.8 v1.6" fill="none" stroke="#a0a0a0" stroke-width="1"/><rect x="271.2" y="38.4" width="1" height="6" fill="#b0b0b0"/><rect x="272.7" y="38.4" width="1" height="6" fill="#b0b0b0"/><rect x="274.2" y="38.4" width="0.8" height="6" fill="#b0b0b0"/><path d="M276 40.4 q1.8 -1.6 2.8 0.2 q0 1.4 -1.4 1.8 v1.6" fill="none" stroke="#a0a0a0" stroke-width="1"/><path d="M283.6 37 V45.4" fill="none" stroke="#b4b7c2" stroke-width="0.7"/><rect x="290" y="42.4" width="1.6" height="1.9" fill="#9a9a9a"/><circle cx="290.8" cy="40.6" r="2.1" fill="#e4e4e4" stroke="#9a9a9a" stroke-width="0.8"/><rect x="298.4" y="37.4" width="3.2" height="7.8" fill="#10d8e8"/><path d="M300 38 v6.6" fill="none" stroke="#60b0c0" stroke-width="0.5"/><rect x="304" y="43.6" width="1.6" height="1.9" fill="#222"/><circle cx="304.8" cy="41.8" r="2.1" fill="#f4f4f4" stroke="#222" stroke-width="1"/><path d="M310 38.4 l2.4 2.4 M312.4 38.4 l-2.4 2.4" fill="none" stroke="#f03030" stroke-width="0.7"/><rect x="315.2" y="43.8" width="1.6" height="1.9" fill="#222"/><circle cx="316" cy="42" r="2.1" fill="#f4f4f4" stroke="#222" stroke-width="1"/><ellipse cx="325" cy="41.4" rx="2.8" ry="1.6" fill="none" stroke="#2a2af0" stroke-width="0.7" transform="rotate(45 325 41.4)"/><ellipse cx="325" cy="41.4" rx="2.8" ry="1.6" fill="none" stroke="#2a2af0" stroke-width="0.7" transform="rotate(-45 325 41.4)"/><ellipse cx="325" cy="41.4" rx="1.6" ry="2.8" fill="none" stroke="#f03030" stroke-width="0.6"/><rect x="327.4" y="44" width="1.6" height="1.9" fill="#444"/><circle cx="328.2" cy="42.2" r="2.1" fill="#e8e8d0" stroke="#444" stroke-width="0.8"/><rect x="333.2" y="38.4" width="1" height="6" fill="#b0b0b0"/><rect x="334.7" y="38.4" width="1" height="6" fill="#b0b0b0"/><rect x="336.2" y="38.4" width="0.8" height="6" fill="#b0b0b0"/><path d="M338 40.4 q1.8 -1.6 2.8 0.2 q0 1.4 -1.4 1.8 v1.6" fill="none" stroke="#a0a0a0" stroke-width="1"/><rect x="344.6" y="38.4" width="1" height="6" fill="#b0b0b0"/><rect x="346.1" y="38.4" width="1" height="6" fill="#b0b0b0"/><rect x="347.6" y="38.4" width="0.8" height="6" fill="#b0b0b0"/><path d="M349.4 40.4 q1.8 -1.6 2.8 0.2 q0 1.4 -1.4 1.8 v1.6" fill="none" stroke="#a0a0a0" stroke-width="1"/><rect x="355.6" y="39.6" width="1.2" height="3" fill="#111"/><rect x="357.2" y="39.6" width="1.2" height="3" fill="#111"/><rect x="361" y="43.4" width="1.6" height="1.9" fill="#111"/><circle cx="361.8" cy="41.6" r="2.1" fill="#fff" stroke="#111" stroke-width="1"/><path d="M378 41.6 l4 -3.6 l4 3.6 l-4 3.6z" fill="#2a2af0"/><ellipse cx="382" cy="41.6" rx="2.4" ry="2" fill="#10e0f0"/><path d="M382 39 v5.2" fill="none" stroke="#123" stroke-width="0.6"/><path d="M390 43 l3.8 -5.4 l3.8 5.4 q-3.8 3.6 -7.6 0z" fill="#2a2af0"/><ellipse cx="393.8" cy="42.6" rx="2.6" ry="1.3" fill="#10d8e8"/><path d="M392 42.8 h3.6" fill="none" stroke="#20a040" stroke-width="0.6"/><path d="M401 40.6 h3 l1 -1 l1 1 h3.2 l-1 2.6 h-6.2z" fill="#2a2af0"/><rect x="402" y="40.8" width="6.2" height="1.5" fill="#10e0f0"/><path d="M401.9 42.9 h6.4" fill="none" stroke="#111" stroke-width="0.8"/><path d="M412.4 40.6 h3 l1 -1 l1 1 h3.2 l-1 2.6 h-6.2z" fill="#2a2af0"/><rect x="413.4" y="40.8" width="6.2" height="1.5" fill="#10e0f0"/><path d="M413.3 42.9 h6.4" fill="none" stroke="#111" stroke-width="0.8"/><ellipse cx="428" cy="41.6" rx="4.2" ry="2.6" fill="#2a2af0"/><ellipse cx="427.4" cy="41.6" rx="2.6" ry="1.5" fill="#10e0f0"/><circle cx="428.4" cy="41.6" r="0.8" fill="#20b040"/><ellipse cx="439.2" cy="41.6" rx="4.3" ry="2.5" fill="#2a2af0" stroke="#112" stroke-width="0.4"/><rect x="436.6" y="40.9" width="5" height="1.4" fill="#20b850"/><path d="M447 37 V45.4" fill="none" stroke="#b4b7c2" stroke-width="0.7"/><path d="M451 41.4 l3.6 -3.4 l3.8 3.4z" fill="#181830"/><rect x="456" y="37.6" width="1.2" height="1.6" fill="#f07020"/><rect x="451.6" y="41.2" width="6.4" height="2.4" fill="#e010e8"/><rect x="452" y="43.4" width="5.6" height="1.2" fill="#2020c0"/><path d="M473 37.8 l5.4 5.6" fill="none" stroke="#111" stroke-width="1.3"/><path d="M475 39.8 l4 4" fill="none" stroke="#10c8d8" stroke-width="1"/><path d="M477.6 42.2 l2 2.2 l1 -1.6z" fill="#fff" stroke="#111" stroke-width="0.7"/><path d="M478.2 38.4 h2.4 l-0.8 -0.7 m0.8 0.7 l-0.8 0.7" fill="none" stroke="#111" stroke-width="0.6"/><path d="M484.5 37 V45.4" fill="none" stroke="#b4b7c2" stroke-width="0.7"/><circle cx="491" cy="40.6" r="2.8" fill="#888" stroke="#333" stroke-width="1"/><path d="M493 42.6 l3 3" fill="none" stroke="#10b0d0" stroke-width="1.5"/><path d="M494.6 44.2 l1.6 1.6" fill="none" stroke="#102080" stroke-width="1.5"/><path d="M489.6 39.2 h2.8 v2.6 h-2.8z" fill="none" stroke="#222" stroke-width="0.5"/><circle cx="502.6" cy="40.6" r="2.8" fill="#fff" stroke="#111" stroke-width="1"/><path d="M504.6 42.6 l3 3" fill="none" stroke="#10b0d0" stroke-width="1.5"/><path d="M506.2 44.2 l1.6 1.6" fill="none" stroke="#102080" stroke-width="1.5"/><path d="M502.6 39 v3.2 M501.2 40.4 l1.4 -1.5 l1.4 1.5" fill="none" stroke="#111" stroke-width="0.7"/><circle cx="514" cy="40.6" r="2.8" fill="#fff" stroke="#111" stroke-width="1"/><path d="M516 42.6 l3 3" fill="none" stroke="#10b0d0" stroke-width="1.5"/><path d="M517.6 44.2 l1.6 1.6" fill="none" stroke="#102080" stroke-width="1.5"/><path d="M518.2 38.4 l1.2 0.8 l-1.2 0.8z M518.2 41.2 l1.2 0.8 l-1.2 0.8z" fill="#111"/><circle cx="525.6" cy="40.4" r="2.6" fill="#f4f4f4" stroke="#aaa" stroke-width="0.8"/><path d="M524.4 40.4 h2.4" fill="none" stroke="#999" stroke-width="0.6"/><path d="M527.6 42.4 l2.6 2.8" fill="none" stroke="#aaa" stroke-width="1.1"/><path d="M535 40.4 a3.4 3.4 0 0 1 6 -1.2 M541.4 42.6 a3.4 3.4 0 0 1 -6 1.2" fill="none" stroke="#111" stroke-width="1"/><path d="M541.6 37.8 v2.2 h-2.2z M534.8 45.2 v-2.2 h2.2z" fill="#111"/><path d="M549.8 37.4 v7.6 M546 41.2 h7.6" fill="none" stroke="#111" stroke-width="0.9"/><path d="M549.8 36.8 l1.3 1.5 h-2.6z M549.8 45.6 l1.3 -1.5 h-2.6z M545.4 41.2 l1.5 -1.3 v2.6z M554.2 41.2 l-1.5 -1.3 v2.6z" fill="#111"/><rect x="567.8" y="35.6" width="11.6" height="11" fill="#fbfbfc"/><path d="M567.8 46.6 V35.6 H579.4" fill="none" stroke="#9a9ca6" stroke-width="0.6"/><path d="M579.4 35.6 V46.6 H567.8" fill="none" stroke="#fff" stroke-width="0.6"/><rect x="570" y="38" width="5.4" height="4" fill="none" stroke="#111" stroke-width="0.9" rx="0.8"/><rect x="572.6" y="40.6" width="5.4" height="4.2" fill="none" stroke="#111" stroke-width="0.9" rx="0.8"/><path d="M581.6 39.4 l1.8 -1.8 h5.4 v5.4 l-1.8 1.8 h-5.4z" fill="#30e0e8" stroke="#222" stroke-width="0.8" stroke-linejoin="round"/><path d="M581.6 39.4 h5.4 v5.4 M587 39.4 l1.8 -1.8" fill="none" stroke="#a03030" stroke-width="0.5"/><rect x="584" y="41" width="2" height="2.6" fill="#a0f4f8"/><path d="M592.6 39.2 l2 -1.6 h5.6 l-2 1.6z" fill="#70f0f4"/><rect x="592.6" y="39.2" width="5.6" height="5.6" fill="#18c8d0"/><path d="M598.2 39.2 l2 -1.6 v5.6 l-2 1.6z" fill="#10a0a8"/><path d="M604.2 39 l1.4 -1.4 h3 v3 l-1.4 1.4 h-3z" fill="#30e0e8" stroke="#222" stroke-width="0.7"/><path d="M606 41 h5.4 v4.2 h-5.4z" fill="#30e0e8" stroke="#111" stroke-width="0.9"/><path d="M604.4 38.6 l2.4 -0.8" fill="none" stroke="#e02020" stroke-width="0.6"/><rect x="607.6" y="42.2" width="1.6" height="2" fill="#a0f4f8"/><path d="M615.4 39.4 l3.6 -1.8 l3.8 1.8 l-1.2 4 l-2.6 2 l-2.6 -2z" fill="#8c8c8c" stroke="#aaa" stroke-width="0.4"/><rect x="626.8" y="38.6" width="8" height="4.6" fill="#e8e8e8" stroke="#111" stroke-width="0.9"/><path d="M628 40 h6" fill="none" stroke="#f02020" stroke-width="0.8"/><path d="M628 41.6 h6" fill="none" stroke="#999" stroke-width="0.6"/><path d="M635.4 43.6 v1.8 h-1.8z" fill="#111"/></svg>

<div id="canvas" class="a"></div><div id="redge" class="a"></div>
<svg class="a" style="left:109px;top:48px" width="590" height="466" viewBox="109 48 590 466"><line x1="255.8" y1="58.1" x2="255.8" y2="514.5" stroke="#a0a0a0" stroke-width="1.2" stroke-dasharray="1.2 2.8"/><line x1="109.2" y1="311.5" x2="698.6" y2="311.5" stroke="#a0a0a0" stroke-width="1.2" stroke-dasharray="1.2 2.8"/><polyline points="255.7,409.7 434.3,401.7 472.4,312 486.1,266 503.1,210.3 515.7,89.5" fill="none" stroke="#8e8e8e" stroke-width="1"/><path d="M255.70 378.30 L262.93 376.95 L269.69 375.50 L276.03 373.95 L281.95 372.27 L287.48 370.46 L292.64 368.51 L297.46 366.41 L301.95 364.14 L306.13 361.72 L310.02 359.12 L313.64 356.35 L317.01 353.41 L320.13 350.29 L323.04 347.00 L325.73 343.54 L328.23 339.91 L330.55 336.11 L332.70 332.15 L334.70 328.03 L336.55 323.76 L338.28 319.34 L339.87 314.79 L341.36 310.11 L342.74 305.30 L344.03 300.38 L345.24 295.35 L346.36 290.23 L347.42 285.02 L348.41 279.73 L349.35 274.38 L350.24 268.97 L351.08 263.50 L351.88 258.01 L352.64 252.48 L353.37 246.93 L354.08 241.37 L354.77 235.80 L355.43 230.25 L356.08 224.71 L356.71 219.19 L357.34 213.69 L357.95 208.24 L358.56 202.82 L359.16 197.44 L359.75 192.12 L360.35 186.85 L360.94 181.63 L361.53 176.47 L362.12 171.37 L362.72 166.32 L363.31 161.32 L363.90 156.37 L364.50 151.47 L365.09 146.61 L365.69 141.78 L366.29 136.97 L366.89 132.17 L367.50 127.38 L368.10 122.57 L368.70 117.73 L369.31 112.85 L369.92 107.91 L370.53 102.88 L371.13 97.74 L371.74 92.47 L372.36 87.04 L372.97 81.43 L373.58 75.59 L374.20 69.50" fill="none" stroke="#00c2d2" stroke-width="1.05"/><path d="M255.70 409.70 L261.44 409.37 L267.00 408.99 L272.42 408.58 L277.73 408.12 L282.95 407.61 L288.10 407.06 L293.21 406.45 L298.29 405.79 L303.35 405.08 L308.41 404.30 L313.47 403.46 L318.53 402.54 L323.60 401.56 L328.69 400.49 L333.78 399.35 L338.88 398.11 L343.99 396.79 L349.09 395.37 L354.20 393.86 L359.29 392.25 L364.38 390.53 L369.43 388.71 L374.46 386.77 L379.46 384.73 L384.41 382.57 L389.30 380.29 L394.14 377.90 L398.91 375.39 L403.61 372.76 L408.22 370.02 L412.75 367.15 L417.19 364.16 L421.52 361.06 L425.75 357.84 L429.87 354.50 L433.88 351.05 L437.76 347.49 L441.52 343.81 L445.16 340.03 L448.68 336.15 L452.06 332.16 L455.31 328.07 L458.43 323.89 L461.42 319.61 L464.29 315.25 L467.02 310.80 L469.62 306.27 L472.10 301.67 L474.46 296.99 L476.70 292.25 L478.82 287.45 L480.83 282.58 L482.73 277.66 L484.52 272.70 L486.21 267.68 L487.81 262.63 L489.32 257.54 L490.74 252.41 L492.09 247.26 L493.35 242.08 L494.55 236.88 L495.68 231.66 L496.76 226.43 L497.77 221.19 L498.74 215.93 L499.67 210.68 L500.55 205.41 L501.40 200.15 L502.22 194.89 L503.01 189.62 L503.78 184.36 L504.52 179.11 L505.25 173.86 L505.96 168.61 L506.66 163.37 L507.35 158.14 L508.03 152.91 L508.70 147.68 L509.37 142.46 L510.02 137.23 L510.67 132.01 L511.32 126.79 L511.96 121.56 L512.59 116.32 L513.21 111.08 L513.82 105.83 L514.43 100.57 L515.02 95.29 L515.60 90.00" fill="none" stroke="#00c2d2" stroke-width="1.05"/><rect x="254.9" y="408.9" width="1.6" height="1.6" fill="#f0f000"/><rect x="433.5" y="400.9" width="1.6" height="1.6" fill="#f0f000"/><rect x="471.6" y="311.2" width="1.6" height="1.6" fill="#f0f000"/><rect x="485.3" y="265.2" width="1.6" height="1.6" fill="#f0f000"/><rect x="514.9" y="88.7" width="1.6" height="1.6" fill="#f0f000"/><rect x="502.3" y="209.5" width="1.6" height="1.6" fill="#20e020"/></svg>
<div class="a" style="left:0;top:0;width:700px;height:525px;will-change:transform;pointer-events:none"><div class="t" style="left:254.60px;top:49.84px;font-size:6.8px;color:#e2e2e2;font-weight:bold;transform:scaleX(1.348);transform-origin:0 0;">Z</div><div class="t" style="left:254.80px;top:312.84px;font-size:6.8px;color:#e2e2e2;font-weight:bold;transform:scaleX(1.235);transform-origin:0 0;">X</div><div class="t" style="left:690.50px;top:312.84px;font-size:6.8px;color:#e2e2e2;font-weight:bold;transform:scaleX(1.213);transform-origin:0 0;">Y</div><div class="t" style="left:516.00px;top:89.68px;font-size:6.7px;color:#ffff00;font-weight:bold;-webkit-text-stroke:0.15px #ffff00;">p31</div><div class="t" style="left:503.20px;top:209.68px;font-size:6.7px;color:#20f020;font-weight:bold;transform:scaleX(1.042);transform-origin:0 0;-webkit-text-stroke:0.15px #20f020;">p32_e</div><div class="t" style="left:501.60px;top:193.68px;font-size:6.7px;color:#00f4f4;font-weight:bold;transform:scaleX(1.009);transform-origin:0 0;-webkit-text-stroke:0.15px #00f4f4;">mc3_top</div><div class="t" style="left:486.00px;top:266.68px;font-size:6.7px;color:#ffff00;font-weight:bold;transform:scaleX(1.065);transform-origin:0 0;-webkit-text-stroke:0.15px #ffff00;">p33</div><div class="t" style="left:482.00px;top:279.68px;font-size:6.7px;color:#00f4f4;font-weight:bold;-webkit-text-stroke:0.15px #00f4f4;">mc3_test</div><div class="t" style="left:471.60px;top:312.28px;font-size:6.7px;color:#ffff00;font-weight:bold;transform:scaleX(1.074);transform-origin:0 0;-webkit-text-stroke:0.15px #ffff00;">p34</div><div class="t" style="left:433.00px;top:352.98px;font-size:6.7px;color:#00f4f4;font-weight:bold;transform:scaleX(0.980);transform-origin:0 0;-webkit-text-stroke:0.15px #00f4f4;">mc3_bot</div><div class="t" style="left:433.50px;top:402.68px;font-size:6.7px;color:#ffff00;font-weight:bold;transform:scaleX(1.126);transform-origin:0 0;-webkit-text-stroke:0.15px #ffff00;">p35</div><div class="t" style="left:255.50px;top:410.48px;font-size:6.7px;color:#ffff00;font-weight:bold;transform:scaleX(1.039);transform-origin:0 0;-webkit-text-stroke:0.15px #ffff00;">p36</div><div class="t" style="left:351.70px;top:255.08px;font-size:6.7px;color:#00f4f4;font-weight:bold;transform:scaleX(1.012);transform-origin:0 0;-webkit-text-stroke:0.15px #00f4f4;">mc2_test</div></div>

<div class="a" style="left:0px;top:49px;width:109.5px;height:465.5px;background:#f0f0f0"></div><div class="a" style="left:2px;top:50px;width:98px;height:5.6px;background:linear-gradient(90deg,#a3b8d4,#b7cae1 55%,#cddcee)"></div><div class="t" style="left:3.00px;top:49.28px;font-size:6.4px;color:#3a4b68;transform:scaleX(0.810);transform-origin:0 0;">Entities</div><svg class="a" style="left:102px;top:51px" width="5" height="5" viewBox="-0.6 -0.2 5 5"><path d="M0.4 0.4L3.4 3.4M3.4 0.4L0.4 3.4" stroke="#111" stroke-width="1.35"/></svg><div class="a" style="left:2.2px;top:56.8px;width:104.6px;height:197px;background:#efefef;border-top:1px solid #6e6e6e;border-left:1px solid #6e6e6e;border-right:0.6px solid #d0d0d0;border-bottom:0.6px solid #d8d8d8;box-sizing:border-box"></div><div class="a" style="left:3.2px;top:68.2px;width:103.2px;height:0.9px;background:#7c7c7c"></div><div class="a" style="left:5.2px;top:69px;width:101.3px;height:184.4px;background:#fff"></div><div class="a" style="left:5.4px;top:59.6px;width:25px;height:9.6px;background:#fff;border-left:0.6px solid #fff;border-top:0.6px solid #fafafa;border-right:1px solid #555;box-sizing:border-box;box-shadow:-0.5px -0.5px 0 #ddd"></div><div class="a" style="left:30.6px;top:61px;width:24.6px;height:7.6px;background:#f0f0f0;border-right:1px solid #555;border-top:0.6px solid #fff;box-sizing:border-box"></div><div class="t" style="left:9.00px;top:59.78px;font-size:6.4px;color:#1a1a1a;transform:scaleX(0.825);transform-origin:0 0;">Parents</div><div class="t" style="left:33.50px;top:60.28px;font-size:6.4px;color:#1a1a1a;transform:scaleX(0.818);transform-origin:0 0;">Children</div><div class="a" style="left:9.3px;top:69px;width:0.6px;height:184px;background:#d0d0d0"></div><div class="a" style="left:28.2px;top:69px;width:0.5px;height:170px;background:repeating-linear-gradient(#b0b0b0 0,#b0b0b0 0.6px,#fff 0.6px,#fff 1.2px)"></div><svg class="a" style="left:25px;top:70px" width="7" height="7" viewBox="-0.4 -0.7 7 7"><rect x="0.65" y="0.65" width="4.7" height="4.7" rx="0.3" fill="#fff" stroke="#787878" stroke-width="0.75"/><path d="M2.3 3H3.7M3 2V4" stroke="#000" stroke-width="0.8"/></svg><div class="a" style="left:31px;top:73.45px;width:3px;height:0.5px;background:#d4d8e0"></div><svg class="a" style="left:34px;top:70px" width="8" height="8" viewBox="-0.2 -0.1 8 8"><rect width="7" height="7" fill="#ffff66"/><path d="M0.6 6 L2.4 2.4 L3.7 4.6 L6.3 0.9" fill="none" stroke="#1a22a8" stroke-width="0.95" stroke-linejoin="round"/><path d="M4.5 3.4 L6.5 6.2 M6.3 2.8 L5.5 7" stroke="#1e2460" stroke-width="0.85"/></svg><div class="t" style="left:44.30px;top:69.58px;font-size:6.4px;color:#000;transform:scaleX(0.845);transform-origin:0 0;-webkit-text-stroke:0.1px #000;">curve19</div><svg class="a" style="left:25px;top:78px" width="7" height="7" viewBox="-0.4 -0.7 7 7"><rect x="0.65" y="0.65" width="4.7" height="4.7" rx="0.3" fill="#fff" stroke="#787878" stroke-width="0.75"/><path d="M2.3 3H3.7M3 2V4" stroke="#000" stroke-width="0.8"/></svg><div class="a" style="left:31px;top:81.45px;width:3px;height:0.5px;background:#d4d8e0"></div><svg class="a" style="left:34px;top:78px" width="8" height="8" viewBox="-0.2 -0.1 8 8"><rect width="7" height="7" fill="#ffff66"/><path d="M0.6 6 L2.4 2.4 L3.7 4.6 L6.3 0.9" fill="none" stroke="#1a22a8" stroke-width="0.95" stroke-linejoin="round"/><path d="M4.5 3.4 L6.5 6.2 M6.3 2.8 L5.5 7" stroke="#1e2460" stroke-width="0.85"/></svg><div class="t" style="left:44.30px;top:77.58px;font-size:6.4px;color:#000;transform:scaleX(0.845);transform-origin:0 0;-webkit-text-stroke:0.1px #000;">curve21</div><svg class="a" style="left:25px;top:86px" width="7" height="7" viewBox="-0.4 -0.7 7 7"><rect x="0.65" y="0.65" width="4.7" height="4.7" rx="0.3" fill="#fff" stroke="#787878" stroke-width="0.75"/><path d="M2.3 3H3.7M3 2V4" stroke="#000" stroke-width="0.8"/></svg><div class="a" style="left:31px;top:89.45px;width:3px;height:0.5px;background:#d4d8e0"></div><svg class="a" style="left:34px;top:86px" width="8" height="8" viewBox="-0.2 -0.1 8 8"><rect width="7" height="7" fill="#ffff66"/><path d="M0.6 6 L2.4 2.4 L3.7 4.6 L6.3 0.9" fill="none" stroke="#1a22a8" stroke-width="0.95" stroke-linejoin="round"/></svg><div class="t" style="left:44.30px;top:85.58px;font-size:6.4px;color:#000;transform:scaleX(0.845);transform-origin:0 0;-webkit-text-stroke:0.1px #000;">mc1_bot</div><svg class="a" style="left:25px;top:94px" width="7" height="7" viewBox="-0.4 -0.7 7 7"><rect x="0.65" y="0.65" width="4.7" height="4.7" rx="0.3" fill="#fff" stroke="#787878" stroke-width="0.75"/><path d="M2.3 3H3.7M3 2V4" stroke="#000" stroke-width="0.8"/></svg><div class="a" style="left:31px;top:97.45px;width:3px;height:0.5px;background:#d4d8e0"></div><svg class="a" style="left:34px;top:94px" width="8" height="8" viewBox="-0.2 -0.1 8 8"><rect width="7" height="7" fill="#ffff66"/><path d="M0.6 6 L2.4 2.4 L3.7 4.6 L6.3 0.9" fill="none" stroke="#1a22a8" stroke-width="0.95" stroke-linejoin="round"/><path d="M4.5 3.4 L6.5 6.2 M6.3 2.8 L5.5 7" stroke="#1e2460" stroke-width="0.85"/></svg><div class="t" style="left:44.30px;top:93.58px;font-size:6.4px;color:#000;transform:scaleX(0.845);transform-origin:0 0;-webkit-text-stroke:0.1px #000;">mc1_top</div><svg class="a" style="left:25px;top:102px" width="7" height="7" viewBox="-0.4 -0.7 7 7"><rect x="0.65" y="0.65" width="4.7" height="4.7" rx="0.3" fill="#fff" stroke="#787878" stroke-width="0.75"/><path d="M2.3 3H3.7M3 2V4" stroke="#000" stroke-width="0.8"/></svg><div class="a" style="left:31px;top:105.45px;width:3px;height:0.5px;background:#d4d8e0"></div><svg class="a" style="left:34px;top:102px" width="8" height="8" viewBox="-0.2 -0.1 8 8"><rect width="7" height="7" fill="#ffff66"/><path d="M0.6 6 L2.4 2.4 L3.7 4.6 L6.3 0.9" fill="none" stroke="#1a22a8" stroke-width="0.95" stroke-linejoin="round"/></svg><div class="t" style="left:44.30px;top:101.58px;font-size:6.4px;color:#000;transform:scaleX(0.845);transform-origin:0 0;-webkit-text-stroke:0.1px #000;">mc2_bot</div><svg class="a" style="left:25px;top:110px" width="7" height="7" viewBox="-0.4 -0.7 7 7"><rect x="0.65" y="0.65" width="4.7" height="4.7" rx="0.3" fill="#fff" stroke="#787878" stroke-width="0.75"/><path d="M2.3 3H3.7M3 2V4" stroke="#000" stroke-width="0.8"/></svg><div class="a" style="left:31px;top:113.45px;width:3px;height:0.5px;background:#d4d8e0"></div><svg class="a" style="left:34px;top:110px" width="8" height="8" viewBox="-0.2 -0.1 8 8"><rect width="7" height="7" fill="#ffff66"/><path d="M0.6 6 L2.4 2.4 L3.7 4.6 L6.3 0.9" fill="none" stroke="#1a22a8" stroke-width="0.95" stroke-linejoin="round"/><path d="M4.5 3.4 L6.5 6.2 M6.3 2.8 L5.5 7" stroke="#1e2460" stroke-width="0.85"/></svg><div class="t" style="left:44.30px;top:109.58px;font-size:6.4px;color:#000;transform:scaleX(0.845);transform-origin:0 0;-webkit-text-stroke:0.1px #000;">mc2_top</div><svg class="a" style="left:25px;top:118px" width="7" height="7" viewBox="-0.4 -0.7 7 7"><rect x="0.65" y="0.65" width="4.7" height="4.7" rx="0.3" fill="#fff" stroke="#787878" stroke-width="0.75"/><path d="M2.3 3H3.7M3 2V4" stroke="#000" stroke-width="0.8"/></svg><div class="a" style="left:31px;top:121.45px;width:3px;height:0.5px;background:#d4d8e0"></div><svg class="a" style="left:34px;top:118px" width="8" height="8" viewBox="-0.2 -0.1 8 8"><rect width="7" height="7" fill="#ffff66"/><path d="M0.6 6 L2.4 2.4 L3.7 4.6 L6.3 0.9" fill="none" stroke="#1a22a8" stroke-width="0.95" stroke-linejoin="round"/><path d="M4.5 3.4 L6.5 6.2 M6.3 2.8 L5.5 7" stroke="#1e2460" stroke-width="0.85"/></svg><div class="t" style="left:44.30px;top:117.58px;font-size:6.4px;color:#000;transform:scaleX(0.845);transform-origin:0 0;-webkit-text-stroke:0.1px #000;">mc2a_top</div><svg class="a" style="left:25px;top:126px" width="7" height="7" viewBox="-0.4 -0.7 7 7"><rect x="0.65" y="0.65" width="4.7" height="4.7" rx="0.3" fill="#fff" stroke="#787878" stroke-width="0.75"/><path d="M2.3 3H3.7M3 2V4" stroke="#000" stroke-width="0.8"/></svg><div class="a" style="left:31px;top:129.45px;width:3px;height:0.5px;background:#d4d8e0"></div><svg class="a" style="left:34px;top:126px" width="8" height="8" viewBox="-0.2 -0.1 8 8"><rect width="7" height="7" fill="#ffff66"/><path d="M0.6 6 L2.4 2.4 L3.7 4.6 L6.3 0.9" fill="none" stroke="#1a22a8" stroke-width="0.95" stroke-linejoin="round"/></svg><div class="t" style="left:44.30px;top:125.58px;font-size:6.4px;color:#000;transform:scaleX(0.845);transform-origin:0 0;-webkit-text-stroke:0.1px #000;">mc3_bot</div><svg class="a" style="left:25px;top:134px" width="7" height="7" viewBox="-0.4 -0.7 7 7"><rect x="0.65" y="0.65" width="4.7" height="4.7" rx="0.3" fill="#fff" stroke="#787878" stroke-width="0.75"/><path d="M2.3 3H3.7M3 2V4" stroke="#000" stroke-width="0.8"/></svg><div class="a" style="left:31px;top:137.45px;width:3px;height:0.5px;background:#d4d8e0"></div><svg class="a" style="left:34px;top:134px" width="8" height="8" viewBox="-0.2 -0.1 8 8"><rect width="7" height="7" fill="#ffff66"/><path d="M0.6 6 L2.4 2.4 L3.7 4.6 L6.3 0.9" fill="none" stroke="#1a22a8" stroke-width="0.95" stroke-linejoin="round"/><path d="M4.5 3.4 L6.5 6.2 M6.3 2.8 L5.5 7" stroke="#1e2460" stroke-width="0.85"/></svg><div class="t" style="left:44.30px;top:133.58px;font-size:6.4px;color:#000;transform:scaleX(0.845);transform-origin:0 0;-webkit-text-stroke:0.1px #000;">mc3_top</div><svg class="a" style="left:25px;top:142px" width="7" height="7" viewBox="-0.4 -0.7 7 7"><rect x="0.65" y="0.65" width="4.7" height="4.7" rx="0.3" fill="#fff" stroke="#787878" stroke-width="0.75"/><path d="M2.3 3H3.7M3 2V4" stroke="#000" stroke-width="0.8"/></svg><div class="a" style="left:31px;top:145.45px;width:3px;height:0.5px;background:#d4d8e0"></div><svg class="a" style="left:34px;top:142px" width="8" height="8" viewBox="-0.2 -0.1 8 8"><rect width="7" height="7" fill="#ffff66"/><path d="M0.6 6 L2.4 2.4 L3.7 4.6 L6.3 0.9" fill="none" stroke="#1a22a8" stroke-width="0.95" stroke-linejoin="round"/></svg><div class="t" style="left:44.30px;top:141.58px;font-size:6.4px;color:#000;transform:scaleX(0.845);transform-origin:0 0;-webkit-text-stroke:0.1px #000;">mc4_bot</div><svg class="a" style="left:25px;top:150px" width="7" height="7" viewBox="-0.4 -0.7 7 7"><rect x="0.65" y="0.65" width="4.7" height="4.7" rx="0.3" fill="#fff" stroke="#787878" stroke-width="0.75"/><path d="M2.3 3H3.7M3 2V4" stroke="#000" stroke-width="0.8"/></svg><div class="a" style="left:31px;top:153.45px;width:3px;height:0.5px;background:#d4d8e0"></div><svg class="a" style="left:34px;top:150px" width="8" height="8" viewBox="-0.2 -0.1 8 8"><rect width="7" height="7" fill="#ffff66"/><path d="M0.6 6 L2.4 2.4 L3.7 4.6 L6.3 0.9" fill="none" stroke="#1a22a8" stroke-width="0.95" stroke-linejoin="round"/><path d="M4.5 3.4 L6.5 6.2 M6.3 2.8 L5.5 7" stroke="#1e2460" stroke-width="0.85"/></svg><div class="t" style="left:44.30px;top:149.58px;font-size:6.4px;color:#000;transform:scaleX(0.845);transform-origin:0 0;-webkit-text-stroke:0.1px #000;">mc4_top</div><svg class="a" style="left:25px;top:158px" width="7" height="7" viewBox="-0.4 -0.7 7 7"><rect x="0.65" y="0.65" width="4.7" height="4.7" rx="0.3" fill="#fff" stroke="#787878" stroke-width="0.75"/><path d="M2.3 3H3.7M3 2V4" stroke="#000" stroke-width="0.8"/></svg><div class="a" style="left:31px;top:161.45px;width:3px;height:0.5px;background:#d4d8e0"></div><svg class="a" style="left:34px;top:158px" width="8" height="8" viewBox="-0.2 -0.1 8 8"><rect width="7" height="7" fill="#ffff66"/><path d="M0.6 6 L2.4 2.4 L3.7 4.6 L6.3 0.9" fill="none" stroke="#1a22a8" stroke-width="0.95" stroke-linejoin="round"/></svg><div class="t" style="left:44.30px;top:157.58px;font-size:6.4px;color:#000;transform:scaleX(0.845);transform-origin:0 0;-webkit-text-stroke:0.1px #000;">mc5_bot</div><svg class="a" style="left:25px;top:166px" width="7" height="7" viewBox="-0.4 -0.7 7 7"><rect x="0.65" y="0.65" width="4.7" height="4.7" rx="0.3" fill="#fff" stroke="#787878" stroke-width="0.75"/><path d="M2.3 3H3.7M3 2V4" stroke="#000" stroke-width="0.8"/></svg><div class="a" style="left:31px;top:169.45px;width:3px;height:0.5px;background:#d4d8e0"></div><svg class="a" style="left:34px;top:166px" width="8" height="8" viewBox="-0.2 -0.1 8 8"><rect width="7" height="7" fill="#ffff66"/><path d="M0.6 6 L2.4 2.4 L3.7 4.6 L6.3 0.9" fill="none" stroke="#1a22a8" stroke-width="0.95" stroke-linejoin="round"/><path d="M4.5 3.4 L6.5 6.2 M6.3 2.8 L5.5 7" stroke="#1e2460" stroke-width="0.85"/></svg><div class="t" style="left:44.30px;top:165.58px;font-size:6.4px;color:#000;transform:scaleX(0.845);transform-origin:0 0;-webkit-text-stroke:0.1px #000;">mc5_top</div><svg class="a" style="left:25px;top:174px" width="7" height="7" viewBox="-0.4 -0.7 7 7"><rect x="0.65" y="0.65" width="4.7" height="4.7" rx="0.3" fill="#fff" stroke="#787878" stroke-width="0.75"/><path d="M2.3 3H3.7M3 2V4" stroke="#000" stroke-width="0.8"/></svg><div class="a" style="left:31px;top:177.45px;width:3px;height:0.5px;background:#d4d8e0"></div><svg class="a" style="left:34px;top:174px" width="8" height="8" viewBox="-0.2 -0.1 8 8"><rect width="7" height="7" fill="#ffff66"/><path d="M0.6 6 L2.4 2.4 L3.7 4.6 L6.3 0.9" fill="none" stroke="#1a22a8" stroke-width="0.95" stroke-linejoin="round"/></svg><div class="t" style="left:44.30px;top:173.58px;font-size:6.4px;color:#000;transform:scaleX(0.845);transform-origin:0 0;-webkit-text-stroke:0.1px #000;">mc6_bot</div><svg class="a" style="left:25px;top:182px" width="7" height="7" viewBox="-0.4 -0.7 7 7"><rect x="0.65" y="0.65" width="4.7" height="4.7" rx="0.3" fill="#fff" stroke="#787878" stroke-width="0.75"/><path d="M2.3 3H3.7M3 2V4" stroke="#000" stroke-width="0.8"/></svg><div class="a" style="left:31px;top:185.45px;width:3px;height:0.5px;background:#d4d8e0"></div><svg class="a" style="left:34px;top:182px" width="8" height="8" viewBox="-0.2 -0.1 8 8"><rect width="7" height="7" fill="#ffff66"/><path d="M0.6 6 L2.4 2.4 L3.7 4.6 L6.3 0.9" fill="none" stroke="#1a22a8" stroke-width="0.95" stroke-linejoin="round"/><path d="M4.5 3.4 L6.5 6.2 M6.3 2.8 L5.5 7" stroke="#1e2460" stroke-width="0.85"/></svg><div class="t" style="left:44.30px;top:181.58px;font-size:6.4px;color:#000;transform:scaleX(0.845);transform-origin:0 0;-webkit-text-stroke:0.1px #000;">mc6_top</div><svg class="a" style="left:25px;top:190px" width="7" height="7" viewBox="-0.4 -0.7 7 7"><rect x="0.65" y="0.65" width="4.7" height="4.7" rx="0.3" fill="#fff" stroke="#787878" stroke-width="0.75"/><path d="M2.3 3H3.7M3 2V4" stroke="#000" stroke-width="0.8"/></svg><div class="a" style="left:31px;top:193.45px;width:3px;height:0.5px;background:#d4d8e0"></div><svg class="a" style="left:34px;top:190px" width="8" height="8" viewBox="-0.2 -0.1 8 8"><rect width="7" height="7" fill="#ffff66"/><path d="M0.6 6 L2.4 2.4 L3.7 4.6 L6.3 0.9" fill="none" stroke="#1a22a8" stroke-width="0.95" stroke-linejoin="round"/><path d="M4.5 3.4 L6.5 6.2 M6.3 2.8 L5.5 7" stroke="#1e2460" stroke-width="0.85"/></svg><div class="t" style="left:44.30px;top:189.58px;font-size:6.4px;color:#000;transform:scaleX(0.845);transform-origin:0 0;-webkit-text-stroke:0.1px #000;">vl1</div><svg class="a" style="left:25px;top:198px" width="7" height="7" viewBox="-0.4 -0.7 7 7"><rect x="0.65" y="0.65" width="4.7" height="4.7" rx="0.3" fill="#fff" stroke="#787878" stroke-width="0.75"/><path d="M2.3 3H3.7M3 2V4" stroke="#000" stroke-width="0.8"/></svg><div class="a" style="left:31px;top:201.45px;width:3px;height:0.5px;background:#d4d8e0"></div><svg class="a" style="left:34px;top:198px" width="8" height="8" viewBox="-0.2 -0.1 8 8"><rect width="7" height="7" fill="#ffff66"/><path d="M0.6 6 L2.4 2.4 L3.7 4.6 L6.3 0.9" fill="none" stroke="#1a22a8" stroke-width="0.95" stroke-linejoin="round"/><path d="M4.5 3.4 L6.5 6.2 M6.3 2.8 L5.5 7" stroke="#1e2460" stroke-width="0.85"/></svg><div class="t" style="left:44.30px;top:197.58px;font-size:6.4px;color:#000;transform:scaleX(0.845);transform-origin:0 0;-webkit-text-stroke:0.1px #000;">vl2</div><svg class="a" style="left:25px;top:206px" width="7" height="7" viewBox="-0.4 -0.7 7 7"><rect x="0.65" y="0.65" width="4.7" height="4.7" rx="0.3" fill="#fff" stroke="#787878" stroke-width="0.75"/><path d="M2.3 3H3.7M3 2V4" stroke="#000" stroke-width="0.8"/></svg><div class="a" style="left:31px;top:209.45px;width:3px;height:0.5px;background:#d4d8e0"></div><svg class="a" style="left:34px;top:206px" width="8" height="8" viewBox="-0.2 -0.1 8 8"><rect width="7" height="7" fill="#ffff66"/><path d="M0.6 6 L2.4 2.4 L3.7 4.6 L6.3 0.9" fill="none" stroke="#1a22a8" stroke-width="0.95" stroke-linejoin="round"/><path d="M4.5 3.4 L6.5 6.2 M6.3 2.8 L5.5 7" stroke="#1e2460" stroke-width="0.85"/></svg><div class="t" style="left:44.30px;top:205.58px;font-size:6.4px;color:#000;transform:scaleX(0.845);transform-origin:0 0;-webkit-text-stroke:0.1px #000;">vl3</div><svg class="a" style="left:25px;top:214px" width="7" height="7" viewBox="-0.4 -0.7 7 7"><rect x="0.65" y="0.65" width="4.7" height="4.7" rx="0.3" fill="#fff" stroke="#787878" stroke-width="0.75"/><path d="M2.3 3H3.7M3 2V4" stroke="#000" stroke-width="0.8"/></svg><div class="a" style="left:31px;top:217.45px;width:3px;height:0.5px;background:#d4d8e0"></div><svg class="a" style="left:34px;top:214px" width="8" height="8" viewBox="-0.2 -0.1 8 8"><rect width="7" height="7" fill="#ffff66"/><path d="M0.6 6 L2.4 2.4 L3.7 4.6 L6.3 0.9" fill="none" stroke="#1a22a8" stroke-width="0.95" stroke-linejoin="round"/><path d="M4.5 3.4 L6.5 6.2 M6.3 2.8 L5.5 7" stroke="#1e2460" stroke-width="0.85"/></svg><div class="t" style="left:44.30px;top:213.58px;font-size:6.4px;color:#000;transform:scaleX(0.845);transform-origin:0 0;-webkit-text-stroke:0.1px #000;">vl4</div><svg class="a" style="left:25px;top:222px" width="7" height="7" viewBox="-0.4 -0.7 7 7"><rect x="0.65" y="0.65" width="4.7" height="4.7" rx="0.3" fill="#fff" stroke="#787878" stroke-width="0.75"/><path d="M2.3 3H3.7M3 2V4" stroke="#000" stroke-width="0.8"/></svg><div class="a" style="left:31px;top:225.45px;width:3px;height:0.5px;background:#d4d8e0"></div><svg class="a" style="left:34px;top:222px" width="8" height="8" viewBox="-0.2 -0.1 8 8"><rect width="7" height="7" fill="#ffff66"/><path d="M0.6 6 L2.4 2.4 L3.7 4.6 L6.3 0.9" fill="none" stroke="#1a22a8" stroke-width="0.95" stroke-linejoin="round"/><path d="M4.5 3.4 L6.5 6.2 M6.3 2.8 L5.5 7" stroke="#1e2460" stroke-width="0.85"/></svg><div class="t" style="left:44.30px;top:221.58px;font-size:6.4px;color:#000;transform:scaleX(0.845);transform-origin:0 0;-webkit-text-stroke:0.1px #000;">vl5</div><svg class="a" style="left:25px;top:230px" width="7" height="7" viewBox="-0.4 -0.7 7 7"><rect x="0.65" y="0.65" width="4.7" height="4.7" rx="0.3" fill="#fff" stroke="#787878" stroke-width="0.75"/><path d="M2.3 3H3.7M3 2V4" stroke="#000" stroke-width="0.8"/></svg><div class="a" style="left:31px;top:233.45px;width:3px;height:0.5px;background:#d4d8e0"></div><svg class="a" style="left:34px;top:230px" width="8" height="8" viewBox="-0.2 -0.1 8 8"><rect width="7" height="7" fill="#ffff66"/><path d="M0.6 6 L2.4 2.4 L3.7 4.6 L6.3 0.9" fill="none" stroke="#1a22a8" stroke-width="0.95" stroke-linejoin="round"/><path d="M4.5 3.4 L6.5 6.2 M6.3 2.8 L5.5 7" stroke="#1e2460" stroke-width="0.85"/></svg><div class="t" style="left:44.30px;top:229.58px;font-size:6.4px;color:#000;transform:scaleX(0.845);transform-origin:0 0;-webkit-text-stroke:0.1px #000;">vl6</div><svg class="a" style="left:15px;top:238px" width="7" height="7" viewBox="-0.8 -0.7 7 7"><rect x="0.65" y="0.65" width="4.7" height="4.7" rx="2.35" fill="#fff" stroke="#787878" stroke-width="0.75"/><path d="M2.2 3H3.8" stroke="#000" stroke-width="0.8"/></svg><svg class="a" style="left:24px;top:238px" width="8" height="8" viewBox="-0.8 -0.1 8 8"><rect width="6.6" height="7" fill="#ffff66"/><path d="M0.8 6.2 L5.8 0.8" stroke="#222" stroke-width="0.9"/></svg><div class="t" style="left:35.00px;top:237.58px;font-size:6.4px;color:#000;transform:scaleX(0.784);transform-origin:0 0;-webkit-text-stroke:0.1px #000;">Lines</div><svg class="a" style="left:15px;top:246px" width="7" height="7" viewBox="-0.8 -0.7 7 7"><rect x="0.65" y="0.65" width="4.7" height="4.7" rx="2.35" fill="#fff" stroke="#787878" stroke-width="0.75"/><path d="M2.2 3H3.8" stroke="#000" stroke-width="0.8"/></svg><svg class="a" style="left:24px;top:245px" width="8" height="9" viewBox="0 -0.9 8 9"><path d="M0.5 1.6 Q4 -0.6 7.5 1.6 L4.3 7.2 Z" fill="#f4d000" stroke="#a06000" stroke-width="0.5"/><path d="M2.6 2 Q4.4 1 4.6 3.2 Q4.4 4.6 3.2 4.2" fill="#e02020" stroke="#a01010" stroke-width="0.4"/></svg><div class="t" style="left:35.00px;top:245.58px;font-size:6.4px;color:#000;transform:scaleX(0.820);transform-origin:0 0;-webkit-text-stroke:0.1px #000;">Snakes</div><div class="a" style="left:101.2px;top:69px;width:5.3px;height:184.4px;background:#f1f1f1;border-left:0.5px solid #e2e2e2;box-sizing:border-box"></div><div class="a" style="left:101.6px;top:103.9px;width:4.6px;height:74px;background:linear-gradient(90deg,#f6f6f6,#e3e3e3);border:0.6px solid #b4b4b4;border-radius:1px;box-sizing:border-box"></div><div class="a" style="left:102.7px;top:139.8px;width:2.4px;height:0.5px;background:#777"></div><div class="a" style="left:102.7px;top:140.9px;width:2.4px;height:0.5px;background:#777"></div><div class="a" style="left:102.7px;top:142px;width:2.4px;height:0.5px;background:#777"></div><svg class="a" style="left:102px;top:71px" width="4" height="3" viewBox="-0.2 -0.6 4 3"><path d="M0 2.2 L1.7 0.2 L3.4 2.2Z" fill="#222"/></svg><svg class="a" style="left:102px;top:248px" width="4" height="3" viewBox="-0.2 0 4 3"><path d="M0 0.2 L1.7 2.2 L3.4 0.2Z" fill="#222"/></svg><div class="a" style="left:2px;top:257.2px;width:98px;height:5.6px;background:linear-gradient(90deg,#a3b8d4,#b7cae1 55%,#cddcee)"></div><div class="t" style="left:3.00px;top:256.48px;font-size:6.4px;color:#3a4b68;transform:scaleX(0.840);transform-origin:0 0;">Properties</div><svg class="a" style="left:102px;top:258px" width="5" height="5" viewBox="-0.6 -0.4 5 5"><path d="M0.4 0.4L3.4 3.4M3.4 0.4L0.4 3.4" stroke="#111" stroke-width="1.35"/></svg><div class="a" style="left:2.2px;top:264.2px;width:104.6px;height:142.6px;background:#f0f0f0;border-top:1px solid #6e6e6e;border-left:1px solid #6e6e6e;border-right:0.6px solid #d0d0d0;border-bottom:0.6px solid #d8d8d8;box-sizing:border-box"></div><div class="a" style="left:3.2px;top:272.8px;width:103.2px;height:0.8px;background:#8a8a8a"></div><div class="a" style="left:3.4px;top:273.8px;width:103px;height:132.6px;background:#ececec;border-left:0.8px solid #fff;border-top:0.8px solid #fff;box-sizing:border-box"></div><div class="a" style="left:98.8px;top:265.6px;width:6.6px;height:7.2px;background:#f2f2f2;border-right:0.9px solid #444;border-bottom:0.9px solid #444;border-left:0.5px solid #fff;border-top:0.5px solid #fff;box-sizing:border-box"></div><svg class="a" style="left:99px;top:266px" width="6" height="7" viewBox="-0.6 0 6 7"><circle cx="2.4" cy="1.8" r="1.5" fill="#f0e000" stroke="#444" stroke-width="0.5"/><path d="M2.4 3.2 V6 M2.4 4.6 H3.6 M2.4 5.8 H3.4" stroke="#444" stroke-width="0.9" fill="none"/><circle cx="2.4" cy="1.6" r="0.5" fill="#444"/></svg><div class="a" style="left:2px;top:410.6px;width:98px;height:5.6px;background:linear-gradient(90deg,#a3b8d4,#b7cae1 55%,#cddcee)"></div><div class="t" style="left:3.00px;top:409.88px;font-size:6.4px;color:#3a4b68;transform:scaleX(0.822);transform-origin:0 0;">Selection Set</div><svg class="a" style="left:102px;top:411px" width="5" height="5" viewBox="-0.6 -0.8 5 5"><path d="M0.4 0.4L3.4 3.4M3.4 0.4L0.4 3.4" stroke="#111" stroke-width="1.35"/></svg><div class="a" style="left:2.2px;top:417.6px;width:104.6px;height:96px;background:#f0f0f0;border-top:1px solid #6e6e6e;border-left:1px solid #6e6e6e;border-right:0.6px solid #d0d0d0;box-sizing:border-box"></div><div class="a" style="left:6.2px;top:419.8px;width:9.8px;height:9.2px;background:#f0f0f0;border-right:0.9px solid #555;border-bottom:0.9px solid #555;border-left:0.6px solid #fff;border-top:0.6px solid #fff;box-sizing:border-box"></div><div class="a" style="left:17.6px;top:419.8px;width:9.6px;height:9.2px;background:#f0f0f0;border-right:0.9px solid #555;border-bottom:0.9px solid #555;border-left:0.6px solid #fff;border-top:0.6px solid #fff;box-sizing:border-box"></div><div class="a" style="left:29.8px;top:419.8px;width:9.2px;height:9.2px;background:#f0f0f0;border-right:0.9px solid #555;border-bottom:0.9px solid #555;border-left:0.6px solid #fff;border-top:0.6px solid #fff;box-sizing:border-box"></div><div class="a" style="left:41.4px;top:419.8px;width:10px;height:9.2px;background:#f4f4f4;border:0.9px solid #444;box-sizing:border-box"></div><div class="a" style="left:53.8px;top:419.8px;width:8.6px;height:9.2px;background:#f0f0f0;border-right:0.9px solid #555;border-bottom:0.9px solid #555;border-left:0.6px solid #fff;border-top:0.6px solid #fff;box-sizing:border-box"></div><svg class="a" style="left:5px;top:419px" width="60" height="11" viewBox="5 419 60 11"><g stroke="#333" stroke-width="0.7" fill="none"><path d="M8 421.8V427.6M9.6 421.8V427.6M11.2 421.8V427.6M7.6 421.8H11.6M7.6 427.6H11.6"/><path d="M13.4 422V427.4M12.6 423L13.4 421.9L14.2 423M12.6 426.4L13.4 427.5L14.2 426.4" stroke-width="0.5"/></g><g stroke="#888" stroke-width="0.8" fill="none"><path d="M22 427V421.8M20 423.8L22 421.6L24 423.8"/><path d="M34.2 421.6V426.8M32.2 424.8L34.2 427L36.2 424.8"/><path d="M43.6 421.6L48.8 427.2M48.8 421.6L43.6 427.2"/><path d="M55.6 421.4H60.6M55.6 427.6H60.6M55.8 421.6L60.4 427.4M60.4 421.6L55.8 427.4"/><rect x="55.6" y="421.4" width="5" height="6.2"/></g></svg><div class="t" style="left:67.00px;top:420.62px;font-size:6.3px;color:#111;transform:scaleX(0.810);transform-origin:0 0;">0 Entities</div><div class="a" style="left:5.2px;top:430.2px;width:101.6px;height:82.6px;background:#fff;border-top:1px solid #6e6e6e;border-left:1.2px solid #6e6e6e;box-sizing:border-box"></div><div class="a" style="left:6.4px;top:431.2px;width:100.4px;height:8.6px;background:#f0f0f0;border-bottom:1px solid #555;box-sizing:border-box"></div><div class="a" style="left:56px;top:431.6px;width:1px;height:7.6px;background:#555"></div><div class="a" style="left:57px;top:431.6px;width:0.7px;height:7px;background:#fff"></div><div class="t" style="left:9.00px;top:431.62px;font-size:6.3px;color:#111;transform:scaleX(0.833);transform-origin:0 0;">Name</div><div class="t" style="left:60.70px;top:431.62px;font-size:6.3px;color:#111;transform:scaleX(0.864);transform-origin:0 0;">Type</div><div class="a" style="left:6.4px;top:507.2px;width:100.4px;height:5.4px;background:#f0f0f0"></div><div class="a" style="left:8.6px;top:507.6px;width:86px;height:4.4px;background:linear-gradient(#f8f8f8,#e4e4e4);border:0.6px solid #b4b4b4;border-radius:1px;box-sizing:border-box"></div><svg class="a" style="left:6px;top:508px" width="3" height="4" viewBox="-0.4 -0.4 3 4"><path d="M2.2 0L0.3 1.6L2.2 3.2Z" fill="#222"/></svg><svg class="a" style="left:103px;top:508px" width="4" height="4" viewBox="-0.8 -0.4 4 4"><path d="M0.2 0L2.1 1.6L0.2 3.2Z" fill="#222"/></svg>

<div class="a" style="left:151.8px;top:431.8px;width:517.2px;height:74.4px;background:#cfe0f2;border:0.8px solid #e6f0fa;box-sizing:border-box;box-shadow:0 0.6px 0 0.4px #5cc4ec"></div><div class="a" style="left:152.6px;top:432.6px;width:515.6px;height:10.6px;background:linear-gradient(#a6c2e2 0,#b4cde9 45%,#c3d7ee 80%,#d3e2f2 100%)"></div><div class="t" style="left:153.80px;top:434.34px;font-size:6.8px;color:#15192a;transform:scaleX(0.856);transform-origin:0 0;text-shadow:0 0 1.5px #dde9f6;">Curvature: PolyCurve mc3_test</div><div class="a" style="left:659.4px;top:434.2px;width:7.4px;height:7.4px;background:linear-gradient(#efc0b2,#dc7560 50%,#cf5a42);border:0.7px solid #a8584a;border-radius:1.4px;box-sizing:border-box"></div><svg class="a" style="left:661px;top:435px" width="5" height="6" viewBox="0 -0.8 5 6"><path d="M0.5 0.5L3.7 3.7M3.7 0.5L0.5 3.7" stroke="#fff" stroke-width="1.2"/></svg><div class="a" style="left:154.2px;top:444.5px;width:512.6px;height:58.3px;background:#f0f0f0;border-top:0.9px solid #8a8a8a;border-left:0.9px solid #8a8a8a;border-right:0.6px solid #fff;border-bottom:0.6px solid #fff;box-sizing:border-box"></div><div class="a" style="left:155.1px;top:445.4px;width:511.2px;height:1.6px;background:#fbfbfb"></div><div class="a" style="left:155.1px;top:445.4px;width:1.4px;height:57px;background:#fbfbfb"></div><div class="a" style="left:192.2px;top:447.2px;width:467.6px;height:54.4px;background:#fff"></div><div class="a" style="left:660.4px;top:447.2px;width:5.6px;height:54.8px;background:#f0f0f0"></div><div class="a" style="left:660.8px;top:453.4px;width:4.8px;height:39px;background:linear-gradient(90deg,#f6f6f6,#dcdcdc);border:0.6px solid #c6c6c6;border-radius:1px;box-sizing:border-box"></div><div class="a" style="left:661.8px;top:468.2px;width:2.8px;height:0.5px;background:#666"></div><div class="a" style="left:661.8px;top:469.3px;width:2.8px;height:0.5px;background:#666"></div><div class="a" style="left:661.8px;top:470.4px;width:2.8px;height:0.5px;background:#666"></div><svg class="a" style="left:661px;top:449px" width="4" height="3" viewBox="-0.4 0 4 3"><path d="M0 2.2 L1.7 0.2 L3.4 2.2Z" fill="#222"/></svg><svg class="a" style="left:661px;top:498px" width="4" height="3" viewBox="-0.4 -0.2 4 3"><path d="M0 0.2 L1.7 2.2 L3.4 0.2Z" fill="#222"/></svg><div class="a" style="left:160.6px;top:462.6px;width:29.6px;height:13px;background:#f0f0f0;border-right:1px solid #555;border-bottom:1px solid #555;border-left:0.7px solid #fff;border-top:0.7px solid #fff;box-sizing:border-box"></div><div class="a" style="left:160.6px;top:477.8px;width:12.6px;height:13px;background:#f0f0f0;border-right:1px solid #555;border-bottom:1px solid #555;border-left:0.7px solid #fff;border-top:0.7px solid #fff;box-sizing:border-box"></div><svg class="a" style="left:192px;top:447px" width="468" height="55" viewBox="192 447 468 55"><line x1="199.70" y1="451" x2="199.70" y2="498" stroke="#e4e4e4" stroke-width="0.6"/><line x1="244.71" y1="451" x2="244.71" y2="498" stroke="#e4e4e4" stroke-width="0.6"/><line x1="289.72" y1="451" x2="289.72" y2="498" stroke="#e4e4e4" stroke-width="0.6"/><line x1="334.73" y1="451" x2="334.73" y2="498" stroke="#e4e4e4" stroke-width="0.6"/><line x1="379.74" y1="451" x2="379.74" y2="498" stroke="#e4e4e4" stroke-width="0.6"/><line x1="424.75" y1="451" x2="424.75" y2="498" stroke="#e4e4e4" stroke-width="0.6"/><line x1="469.76" y1="451" x2="469.76" y2="498" stroke="#e4e4e4" stroke-width="0.6"/><line x1="514.77" y1="451" x2="514.77" y2="498" stroke="#e4e4e4" stroke-width="0.6"/><line x1="559.78" y1="451" x2="559.78" y2="498" stroke="#e4e4e4" stroke-width="0.6"/><line x1="604.79" y1="451" x2="604.79" y2="498" stroke="#e4e4e4" stroke-width="0.6"/><line x1="649.80" y1="451" x2="649.80" y2="498" stroke="#e4e4e4" stroke-width="0.6"/><line x1="194.5" y1="465.2" x2="655" y2="465.2" stroke="#e6e6e6" stroke-width="0.6"/><line x1="194.5" y1="480.4" x2="655" y2="480.4" stroke="#e6e6e6" stroke-width="0.6"/><line x1="194.5" y1="450.4" x2="655" y2="450.4" stroke="#222" stroke-width="0.9"/><path d="M199.70 495.2V497.8M208.70 495.2V497.8M217.70 495.2V497.8M226.71 495.2V497.8M235.71 495.2V497.8M244.71 495.2V497.8M253.71 495.2V497.8M262.71 495.2V497.8M271.72 495.2V497.8M280.72 495.2V497.8M289.72 495.2V497.8M298.72 495.2V497.8M307.72 495.2V497.8M316.73 495.2V497.8M325.73 495.2V497.8M334.73 495.2V497.8M343.73 495.2V497.8M352.73 495.2V497.8M361.74 495.2V497.8M370.74 495.2V497.8M379.74 495.2V497.8M388.74 495.2V497.8M397.74 495.2V497.8M406.75 495.2V497.8M415.75 495.2V497.8M424.75 495.2V497.8M433.75 495.2V497.8M442.75 495.2V497.8M451.76 495.2V497.8M460.76 495.2V497.8M469.76 495.2V497.8M478.76 495.2V497.8M487.76 495.2V497.8M496.77 495.2V497.8M505.77 495.2V497.8M514.77 495.2V497.8M523.77 495.2V497.8M532.77 495.2V497.8M541.78 495.2V497.8M550.78 495.2V497.8M559.78 495.2V497.8M568.78 495.2V497.8M577.78 495.2V497.8M586.79 495.2V497.8M595.79 495.2V497.8M604.79 495.2V497.8M613.79 495.2V497.8M622.79 495.2V497.8M631.80 495.2V497.8M640.80 495.2V497.8M649.80 495.2V497.8" stroke="#bcbcbc" stroke-width="0.6"/><path d="M199.49 464.13 L202.42 464.32 L205.35 464.53 L208.27 464.75 L211.19 464.99 L214.10 465.24 L217.00 465.50 L219.91 465.77 L222.80 466.06 L225.70 466.36 L228.59 466.68 L231.47 467.00 L234.35 467.34 L237.23 467.69 L240.11 468.05 L242.98 468.42 L245.85 468.80 L248.71 469.19 L251.57 469.59 L254.43 470.00 L257.29 470.42 L260.15 470.85 L263.00 471.29 L265.85 471.74 L268.70 472.20 L271.55 472.67 L274.39 473.14 L277.24 473.62 L280.08 474.11 L282.93 474.61 L285.77 475.11 L288.61 475.62 L291.45 476.14 L294.29 476.66 L297.13 477.19 L299.97 477.72 L302.81 478.26 L305.65 478.81 L308.49 479.36 L311.33 479.91 L314.18 480.47 L317.02 481.03 L319.86 481.60 L322.71 482.17 L325.56 482.74 L328.41 483.32 L331.26 483.89 L334.11 484.48 L336.96 485.06 L339.82 485.64 L342.68 486.23 L345.54 486.82 L348.40 487.41 L351.27 487.99 L354.13 488.57 L357.00 489.15 L359.88 489.71 L362.75 490.27 L365.62 490.81 L368.50 491.33 L371.37 491.84 L374.25 492.33 L377.12 492.79 L380.00 493.23 L382.88 493.65 L385.75 494.03 L388.63 494.39 L391.50 494.71 L394.37 495.00 L397.25 495.25 L400.12 495.46 L402.99 495.63 L405.86 495.75 L408.72 495.83 L411.59 495.86 L414.45 495.85 L417.31 495.77 L420.16 495.65 L423.02 495.46 L425.87 495.22 L428.71 494.92 L431.56 494.55 L434.39 494.12 L437.23 493.62 L440.06 493.05 L442.89 492.41 L445.71 491.69 L448.53 490.90 L451.34 490.03 L454.14 489.07 L456.91 488.03 L459.65 486.91 L462.34 485.68 L464.97 484.36 L467.53 482.94 L470.01 481.41 L472.39 479.77 L474.67 478.04 L476.92 476.27 L479.17 474.53 L481.48 472.88 L483.88 471.36 L486.35 469.97 L488.89 468.69 L491.50 467.52 L494.17 466.46 L496.88 465.50 L499.64 464.63 L502.43 463.84 L505.25 463.14 L508.09 462.51 L510.94 461.95 L513.81 461.44 L516.69 460.98 L519.58 460.56 L522.47 460.16 L525.36 459.78 L528.25 459.41 L531.14 459.05 L534.03 458.70 L536.92 458.37 L539.81 458.05 L542.70 457.74 L545.59 457.44 L548.48 457.16 L551.37 456.89 L554.26 456.62 L557.15 456.37 L560.04 456.13 L562.93 455.90 L565.81 455.68 L568.70 455.47 L571.59 455.28 L574.48 455.09 L577.37 454.91 L580.26 454.74 L583.15 454.58 L586.04 454.43 L588.93 454.30 L591.83 454.16 L594.72 454.04 L597.61 453.93 L600.50 453.83 L603.40 453.73 L606.29 453.65 L609.19 453.57 L612.08 453.50 L614.98 453.43 L617.88 453.38 L620.78 453.33 L623.68 453.29 L626.58 453.26 L629.48 453.23 L632.38 453.22 L635.28 453.20 L638.19 453.20 L641.09 453.20 L644.00 453.21 L646.91 453.22 L649.82 453.24" fill="none" stroke="#3030f0" stroke-width="1.1"/><path d="M278.90 474.00h3M280.40 472.50v3M341.90 486.40h3M343.40 484.90v3M390.90 494.80h3M392.40 493.30v3M431.10 494.00h3M432.60 492.50v3M463.90 484.60h3M465.40 483.10v3M490.50 467.00h3M492.00 465.50v3M521.90 460.00h3M523.40 458.50v3M557.90 456.20h3M559.40 454.70v3M600.90 453.70h3M602.40 452.20v3" stroke="#111" stroke-width="0.9"/><circle cx="649.8" cy="453.2" r="1.5" fill="none" stroke="#222" stroke-width="0.7"/></svg><svg class="a" style="left:160px;top:462px" width="31" height="30" viewBox="160 462 31 30"><path d="M163.5 471.5 Q175 463.5 187 470" fill="none" stroke="#111" stroke-width="1.1"/><path d="M162.6 470.6 Q175 461.6 187.6 468.6" fill="none" stroke="#4a4af0" stroke-width="2" stroke-dasharray="0.7 0.8"/><circle cx="166.8" cy="484.2" r="3.6" fill="#fff" stroke="#e01818" stroke-width="1.1"/><path d="M164.4 486.8L169.2 481.8" stroke="#e01818" stroke-width="1"/><path d="M165.6 485.6 Q167 482.4 168.6 484.6" fill="none" stroke="#2a2ab0" stroke-width="0.7"/></svg>

<div id="status" class="a"><div class="t" style="left:2.00px;top:1.05px;font-size:6.5px;color:#111;transform:scaleX(0.845);transform-origin:0 0;">For Help, press F1.</div><div class="pane" style="left:280.4px;width:159.2px"><div class="t" style="left:1.40px;top:-0.82px;font-size:6.4px;color:#111;transform:scaleX(0.840);transform-origin:0 0;">L:0</div></div><div class="pane" style="left:440.8px;width:55.3px"><div class="t" style="left:1.40px;top:-0.82px;font-size:6.4px;color:#111;transform:scaleX(0.840);transform-origin:0 0;">Grid: 0.1</div></div><div class="pane" style="left:497.3px;width:42.8px"><div class="t" style="left:1.40px;top:-0.82px;font-size:6.4px;color:#111;transform:scaleX(0.840);transform-origin:0 0;">Lat 0.0</div></div><div class="pane" style="left:541.3px;width:42.2px"><div class="t" style="left:1.40px;top:-0.82px;font-size:6.4px;color:#111;transform:scaleX(0.840);transform-origin:0 0;">Lon 180.0</div></div><div class="pane" style="left:584.7px;width:63.1px"><div class="t" style="left:1.40px;top:-0.82px;font-size:6.4px;color:#111;transform:scaleX(0.840);transform-origin:0 0;">Radius 5.37</div></div><div class="pane" style="left:649px;width:49.8px"><div class="t" style="left:1.40px;top:-0.82px;font-size:6.4px;color:#111;transform:scaleX(0.840);transform-origin:0 0;">Tilt 0.0</div></div></div>
<div id="bedge" class="a"></div>
</body></html>
